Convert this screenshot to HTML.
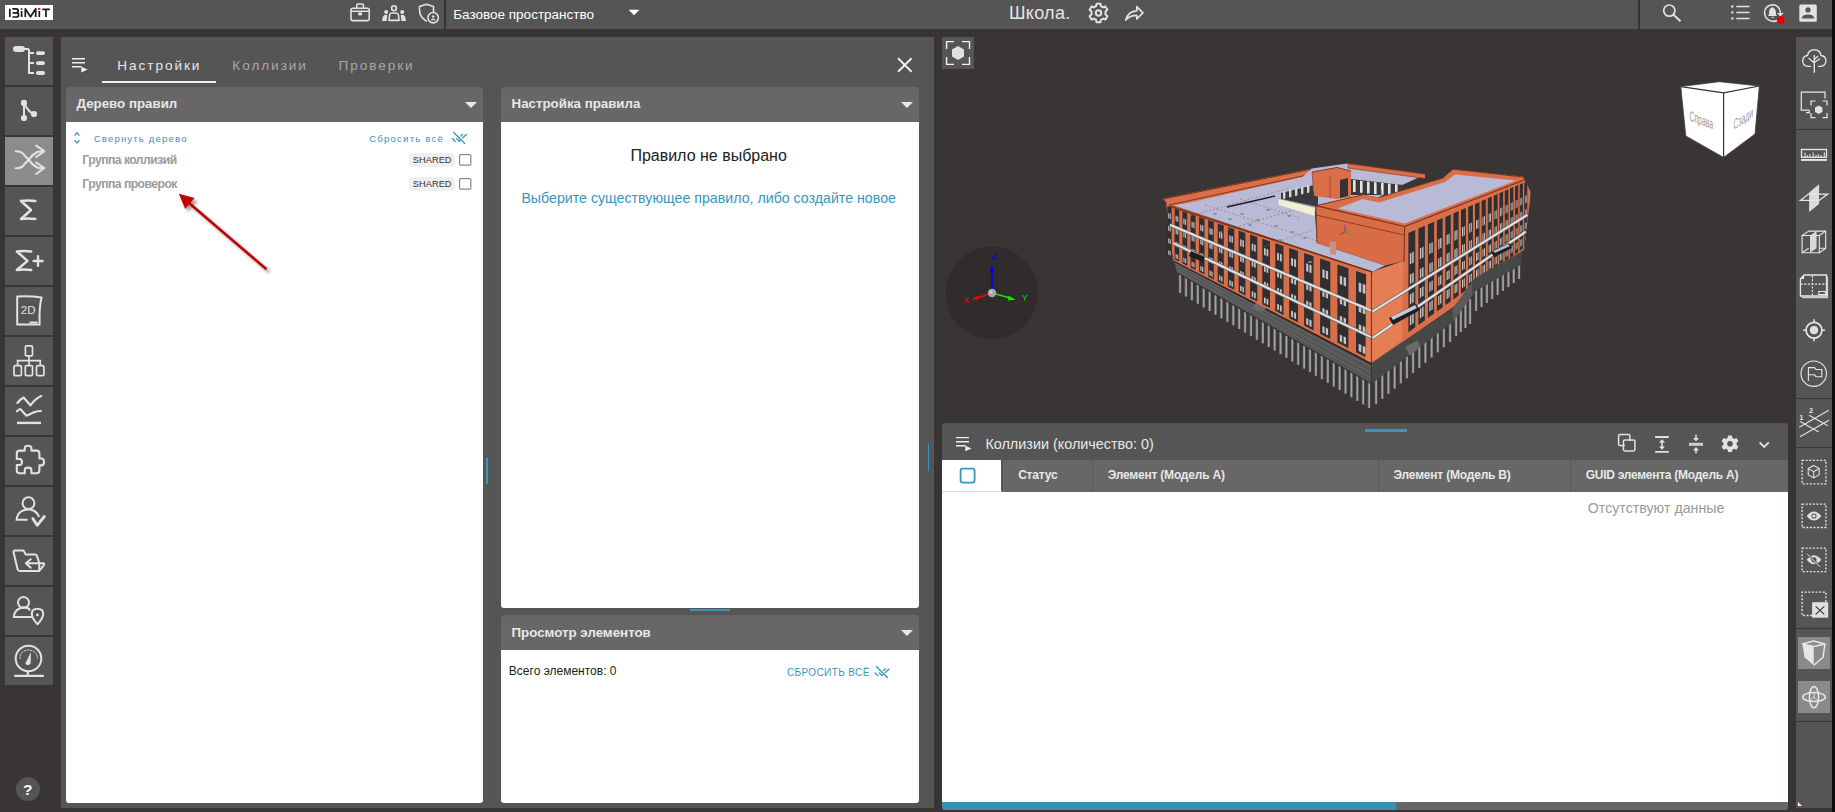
<!DOCTYPE html>
<html><head><meta charset="utf-8">
<style>
*{margin:0;padding:0;box-sizing:border-box}
html,body{width:1835px;height:812px;overflow:hidden;background:#393535;font-family:"Liberation Sans",sans-serif}
.a{position:absolute}
.t{position:absolute;white-space:nowrap}
svg{position:absolute;overflow:visible}
</style></head><body>

<div class="a" style="left:0px;top:0px;width:1835px;height:29px;background:#555555;"></div>
<div class="a" style="left:5px;top:5px;width:48px;height:15px;background:#ffffff;"></div>
<svg style="left:0;top:0" width="1835" height="29">
<g fill="none" stroke="#1a1a1a" stroke-width="1.7" stroke-linejoin="round">
  <path d="M9.8 8.8V17"/>
  <path d="M12.4 8.8H16.1Q18.2 8.8 18.2 10.8Q18.2 12.8 16.1 12.8H12.6M16.1 12.8Q18.6 12.8 18.6 14.9Q18.6 17 16.1 17H12.4"/>
  <path d="M21.6 11V17"/>
  <path d="M25.3 17V8.8L30.5 16.8L35.7 8.8V17"/>
  <path d="M39.3 11V17"/>
  <path d="M42.3 9.3H49.8M46 9.3V17"/>
</g>
<rect x="20.8" y="8.3" width="1.6" height="1.6" fill="#1a1a1a"/>
<rect x="38.2" y="7.9" width="2.1" height="2" fill="#ff0000"/>
<g fill="none" stroke="#e2e2e2" stroke-linecap="round" stroke-linejoin="round" stroke-width="1.6">
  <rect x="351" y="8.2" width="18.2" height="12.4" rx="1.5"/>
  <path d="M356.8 8V5Q356.8 4 357.8 4H362.4Q363.4 4 363.4 5V8"/>
  <path d="M351 11.2H369.2"/>
</g>
<rect x="358.2" y="12.5" width="3.8" height="2.8" fill="#e2e2e2"/>
<circle cx="394" cy="8.2" r="2.4" fill="none" stroke="#e2e2e2" stroke-linecap="round" stroke-linejoin="round" stroke-width="1.6"/>
<circle cx="386.2" cy="12.1" r="2" fill="#e2e2e2"/>
<circle cx="402.2" cy="12.1" r="2" fill="#e2e2e2"/>
<path d="M389 20.4L389.6 15Q390 13 392 13H396Q398 13 398.4 15L399.1 20.4Z" fill="none" stroke="#e2e2e2" stroke-linecap="round" stroke-linejoin="round" stroke-width="1.6"/>
<path d="M382 21L382.8 17Q383.5 14.8 386 14.8L387.2 15L386.6 21Z" fill="#e2e2e2"/>
<path d="M406 21L405.2 17Q404.5 14.8 402 14.8L400.8 15L401.4 21Z" fill="#e2e2e2"/>
<path d="M426.3 21Q419.5 17 419.5 10V6.6L426.5 4.3L433.5 6.6V11.8" fill="none" stroke="#e2e2e2" stroke-linecap="round" stroke-linejoin="round" stroke-width="1.6"/>
<circle cx="433.2" cy="17.7" r="5.2" fill="none" stroke="#e2e2e2" stroke-linecap="round" stroke-linejoin="round" stroke-width="1.6"/>
<circle cx="433.2" cy="16.5" r="1.2" fill="#e2e2e2"/>
<path d="M430.8 20.2Q431 18.6 433.2 18.6Q435.4 18.6 435.6 20.2Z" fill="#e2e2e2"/>
<path d="M628.6 9.8H639.5L634 15.3Z" fill="#ffffff"/>
<g transform="translate(1098.5 13)">
  <path d="M-2 -9.2H2L2.4 -6.8L4.6 -5.6L6.9 -6.6L8.9 -3.2L7 -1.6V1.6L8.9 3.2L6.9 6.6L4.6 5.6L2.4 6.8L2 9.2H-2L-2.4 6.8L-4.6 5.6L-6.9 6.6L-8.9 3.2L-7 1.6V-1.6L-8.9 -3.2L-6.9 -6.6L-4.6 -5.6L-2.4 -6.8Z" fill="none" stroke="#e2e2e2" stroke-linecap="round" stroke-linejoin="round" stroke-width="2"/>
  <circle cx="0" cy="0" r="2.7" fill="none" stroke="#e2e2e2" stroke-linecap="round" stroke-linejoin="round" stroke-width="2"/>
</g>
<path d="M1125.8 20Q1128 11.2 1136.8 10.8V6.6L1142.9 12.9L1136.8 19V15.3Q1130 15.2 1125.8 20Z" fill="none" stroke="#e2e2e2" stroke-width="1.7" stroke-linejoin="round"/>
<circle cx="1669.3" cy="10.6" r="5.6" fill="none" stroke="#e2e2e2" stroke-linecap="round" stroke-linejoin="round" stroke-width="1.7"/>
<path d="M1673.5 14.8L1680.5 21.2" fill="none" stroke="#e2e2e2" stroke-width="1.9"/>
<circle cx="1732.3" cy="6.5" r="1.2" fill="#e2e2e2"/>
<circle cx="1732.3" cy="12.4" r="1.2" fill="#e2e2e2"/>
<circle cx="1732.3" cy="18.4" r="1.2" fill="#e2e2e2"/>
<path d="M1736.3 6.5H1749.5M1736.3 12.4H1749.5M1736.3 18.4H1749.5" fill="none" stroke="#e2e2e2" stroke-width="1.5"/>
<path d="M1779 19.8Q1775.5 21.8 1772 21.2Q1765 20 1764.5 12.5Q1765 5.5 1772.5 4.7Q1779.5 5 1780.5 12.5" fill="none" stroke="#e2e2e2" stroke-linecap="round" stroke-linejoin="round" stroke-width="1.6"/>
<path d="M1777 13H1783.8L1780.3 16.4Z" fill="#e2e2e2"/>
<path d="M1768 16H1777L1775.9 14.2V11.6Q1775.6 8.7 1772.4 7.1Q1769.2 8.7 1769.1 11.6V14.2Z" fill="#e2e2e2"/>
<rect x="1771.7" y="16.8" width="2" height="1" fill="#e2e2e2"/>
<circle cx="1780.8" cy="20" r="3.9" fill="#ee0000"/>
<rect x="1799.3" y="4.5" width="17.5" height="17.3" rx="1.5" fill="#e2e2e2"/>
<circle cx="1808" cy="9.9" r="2.6" fill="#555555"/>
<path d="M1801.8 18.6Q1802 14.8 1808 14.6Q1814 14.8 1814.3 18.6Z" fill="#555555"/>
</svg>
<div class="a" style="left:444px;top:0px;width:2px;height:29px;background:#353232;"></div>
<div class="a" style="left:1638px;top:0px;width:2px;height:29px;background:#353232;"></div>
<div class="a" style="left:1832px;top:0px;width:3px;height:29px;background:#393535;"></div>
<div class="t" style="left:453.25px;top:7.72px;font-size:13.5px;line-height:13.5px;color:#ffffff;font-weight:normal;letter-spacing:0px;">Базовое пространство</div>
<div class="t" style="left:1009.04px;top:3.90px;font-size:18px;line-height:18px;color:#e6e6e6;font-weight:normal;letter-spacing:0.3px;">Школа.</div>
<div class="a" style="left:5px;top:37px;width:48px;height:48px;background:#555555;"></div>
<svg style="left:5px;top:37px" width="48" height="48"><rect x="8" y="9" width="12" height="6" rx="3" fill="#e2e2e2"/><path d="M19 12H22.5Q24 12 24 13.5V36H29M24 16H29M24 26H29" fill="none" stroke="#e2e2e2" stroke-width="2"/><rect x="31" y="14.2" width="9" height="3.8" rx="1.9" fill="#e2e2e2"/><rect x="31" y="24.2" width="9" height="3.8" rx="1.9" fill="#e2e2e2"/><rect x="31" y="34.1" width="9" height="3.8" rx="1.9" fill="#e2e2e2"/></svg>
<div class="a" style="left:5px;top:87px;width:48px;height:48px;background:#555555;"></div>
<svg style="left:5px;top:87px" width="48" height="48"><circle cx="19" cy="15.9" r="3.1" fill="#e2e2e2"/><circle cx="19" cy="31" r="3.1" fill="#e2e2e2"/><circle cx="29" cy="27" r="3.1" fill="#e2e2e2"/><path d="M19 16V31M19.5 17Q23 24 28 27" fill="none" stroke="#e2e2e2" stroke-linecap="round" stroke-linejoin="round" stroke-width="2"/></svg>
<div class="a" style="left:5px;top:137px;width:48px;height:48px;background:#8c8c8c;"></div>
<svg style="left:5px;top:137px" width="48" height="48"><path d="M10.8 14.2Q17 14 19.5 18.5L23.7 22.8Q27 27.5 32 30.5Q35 31.2 39.3 31M10.8 31.3Q17 31.5 19.5 27L23.7 22.8Q27 18 32 15Q35 14.2 39.3 14.2M31.2 8.6L39.3 14.2L31.2 20M31.2 25.5L39.3 31L31.2 37" fill="none" stroke="#e2e2e2" stroke-linecap="round" stroke-linejoin="round" stroke-width="2.1"/></svg>
<div class="a" style="left:5px;top:187px;width:48px;height:48px;background:#555555;"></div>
<svg style="left:5px;top:187px" width="48" height="48"><path d="M16 14Q23 13 30.3 14M16 14L26 23L16 32Q23 31 30.3 32" fill="none" stroke="#e2e2e2" stroke-linecap="round" stroke-linejoin="round" stroke-width="2.6"/></svg>
<div class="a" style="left:5px;top:237px;width:48px;height:48px;background:#555555;"></div>
<svg style="left:5px;top:237px" width="48" height="48"><path d="M11.8 14.5Q19 13.5 26.2 14.5M11.8 14.5L22.5 23.8L11.8 33Q19 32 26.2 33M28.6 24H37.6M33 19.2V28.8" fill="none" stroke="#e2e2e2" stroke-linecap="round" stroke-linejoin="round" stroke-width="2.4"/></svg>
<div class="a" style="left:5px;top:287px;width:48px;height:48px;background:#555555;"></div>
<svg style="left:5px;top:287px" width="48" height="48"><path d="M12.2 9.5Q24 8.5 36.6 10.5Q34 20 34.6 37.5H12.2Z" fill="none" stroke="#e2e2e2" stroke-linecap="round" stroke-linejoin="round" stroke-width="2"/><path d="M25 34.5H32.5V36.5H24Z" fill="#e2e2e2"/><text x="15.8" y="27" font-family="Liberation Sans" font-size="11.5" fill="#e2e2e2">2D</text></svg>
<div class="a" style="left:5px;top:337px;width:48px;height:48px;background:#555555;"></div>
<svg style="left:5px;top:337px" width="48" height="48"><rect x="20.4" y="8.9" width="7.1" height="10" rx="1.2" fill="none" stroke="#e2e2e2" stroke-linecap="round" stroke-linejoin="round" stroke-width="1.7"/><path d="M24 19V28.4M12.6 28.4V23.6H35.2V28.4" fill="none" stroke="#e2e2e2" stroke-width="1.7"/><rect x="9" y="28.6" width="7.4" height="10" rx="1.2" fill="none" stroke="#e2e2e2" stroke-linecap="round" stroke-linejoin="round" stroke-width="1.7"/><rect x="20.3" y="28.6" width="7.2" height="10" rx="1.2" fill="none" stroke="#e2e2e2" stroke-linecap="round" stroke-linejoin="round" stroke-width="1.7"/><rect x="31.5" y="28.6" width="7.4" height="10" rx="1.2" fill="none" stroke="#e2e2e2" stroke-linecap="round" stroke-linejoin="round" stroke-width="1.7"/></svg>
<div class="a" style="left:5px;top:387px;width:48px;height:48px;background:#555555;"></div>
<svg style="left:5px;top:387px" width="48" height="48"><path d="M12.4 16Q15.5 12 18.6 10.5L25.4 18.3Q31 11 36.3 9" fill="none" stroke="#e2e2e2" stroke-linecap="round" stroke-linejoin="round" stroke-width="2.2"/><path d="M12 24.3Q14 22 15.3 22L21.5 28.7L29 25.3Q33 24 35.8 24" fill="none" stroke="#e2e2e2" stroke-linecap="round" stroke-linejoin="round" stroke-width="2.2"/><path d="M12 35.9H36" fill="none" stroke="#e2e2e2" stroke-width="2.4"/></svg>
<div class="a" style="left:5px;top:437px;width:48px;height:48px;background:#555555;"></div>
<svg style="left:5px;top:437px" width="48" height="48"><path d="M14.5 13.6H19.8V11.2Q19.8 8.8 23 8.8Q26.4 8.8 26.4 11.2V13.6H31.6Q34.4 13.6 34.4 16.4V21.5H36.5Q39 21.5 39 25Q39 28.4 36.5 28.4H34.4V33.5Q34.4 36.2 31.6 36.2H26.4V33Q26.4 30.6 23 30.6Q19.8 30.6 19.8 33V36.2H14.5Q11.8 36.2 11.8 33.5V28H14.5Q17 28 17 25Q17 22 14.5 22H11.8V16.4Q11.8 13.6 14.5 13.6Z" fill="none" stroke="#e2e2e2" stroke-linecap="round" stroke-linejoin="round" stroke-width="2.1"/></svg>
<div class="a" style="left:5px;top:487px;width:48px;height:48px;background:#555555;"></div>
<svg style="left:5px;top:487px" width="48" height="48"><circle cx="23.5" cy="16.2" r="5.9" fill="none" stroke="#e2e2e2" stroke-linecap="round" stroke-linejoin="round" stroke-width="2"/><path d="M22.5 32.8H11.6Q12 26 18 23.5Q23.5 21.5 28.5 23.5Q32.5 25.5 34 30" fill="none" stroke="#e2e2e2" stroke-width="2"/><path d="M27.8 31.5L32.2 38.3L39.3 29.5" fill="none" stroke="#e2e2e2" stroke-linecap="round" stroke-linejoin="round" stroke-width="2.8"/></svg>
<div class="a" style="left:5px;top:537px;width:48px;height:48px;background:#555555;"></div>
<svg style="left:5px;top:537px" width="48" height="48"><path d="M34.2 34H14.5Q13 34 12.5 32L8.6 15.5Q8.4 13.8 10 13.6L18.5 13.5L20.8 17.6H30Q31.5 17.6 32 19L34.3 26Z" fill="none" stroke="#e2e2e2" stroke-linecap="round" stroke-linejoin="round" stroke-width="2"/><path d="M33.5 26.2H38.5Q39.8 26.5 38.5 28.6L34.2 34M20.8 26.2H33.5M25.8 22.3L20.8 26.2L25.8 30.7" fill="none" stroke="#e2e2e2" stroke-linecap="round" stroke-linejoin="round" stroke-width="2"/></svg>
<div class="a" style="left:5px;top:587px;width:48px;height:48px;background:#555555;"></div>
<svg style="left:5px;top:587px" width="48" height="48"><circle cx="18.5" cy="15.5" r="5.5" fill="none" stroke="#e2e2e2" stroke-linecap="round" stroke-linejoin="round" stroke-width="2"/><path d="M27 30H8.8Q9.2 24 14.5 21.5Q19 19.5 22.5 21Q24.5 22 25 23.5" fill="none" stroke="#e2e2e2" stroke-width="2"/><path d="M32.5 37.2Q26.8 31 26.8 27Q26.8 21.8 32.5 21.8Q38.2 21.8 38.2 27Q38.2 31 32.5 37.2Z" fill="none" stroke="#e2e2e2" stroke-linecap="round" stroke-linejoin="round" stroke-width="2"/><circle cx="32.4" cy="28" r="1.4" fill="#e2e2e2"/></svg>
<div class="a" style="left:5px;top:637px;width:48px;height:48px;background:#555555;"></div>
<svg style="left:5px;top:637px" width="48" height="48"><circle cx="23.5" cy="21.5" r="12.8" fill="none" stroke="#e2e2e2" stroke-linecap="round" stroke-linejoin="round" stroke-width="2"/><path d="M15 21.5Q15 13.5 23.5 13Q32 13.5 32.5 21.5" fill="none" stroke="#e2e2e2" stroke-linecap="round" stroke-linejoin="round" stroke-width="0.9" stroke-dasharray="1.6 1.4"/><path d="M25.9 15L20.4 26.4Q21.5 28.5 23.6 28Q25.5 27.5 25.7 26Z" fill="#e2e2e2"/><path d="M22.8 34.5V38.5M9.3 38.9H38.8" fill="none" stroke="#e2e2e2" stroke-width="2.2"/></svg>
<div class="a" style="left:16px;top:777px;width:24px;height:24px;border-radius:50%;background:#555555"></div>
<div class="t" style="left:23.11px;top:782.12px;font-size:15.5px;line-height:15.5px;color:#ffffff;font-weight:bold;letter-spacing:0px;">?</div>
<div class="a" style="left:61px;top:37px;width:873px;height:771px;background:#555555;"></div>
<svg style="left:0;top:0" width="940" height="120">
  <path d="M72 58.7H85M72 62.8H85M72 66.8H81.5" stroke="#f0f0f0" stroke-width="1.4"/>
  <path d="M81.3 66.8L87.6 69.6L81.3 72.4Z" fill="#f0f0f0"/>
  <path d="M898 58.3L911.6 71.7M911.6 58.3L898 71.7" stroke="#f0f0f0" stroke-width="1.9"/>
</svg>
<div class="t" style="left:117.35px;top:58.74px;font-size:13.6px;line-height:13.6px;color:#e8e8e8;font-weight:normal;letter-spacing:1.93px;">Настройки</div>
<div class="t" style="left:232.35px;top:58.74px;font-size:13.6px;line-height:13.6px;color:#a8a8a8;font-weight:normal;letter-spacing:1.93px;">Коллизии</div>
<div class="t" style="left:338.55px;top:58.74px;font-size:13.6px;line-height:13.6px;color:#a8a8a8;font-weight:normal;letter-spacing:1.93px;">Проверки</div>
<div class="a" style="left:102px;top:81px;width:114px;height:2px;background:#f0f0f0;"></div>
<div class="a" style="left:66px;top:87px;width:417px;height:35px;background:#676767;border-radius:3px 3px 0 0"></div>
<div class="t" style="left:76.57px;top:97.40px;font-size:13.3px;line-height:13.3px;color:#e8e8e8;font-weight:bold;letter-spacing:0px;">Дерево правил</div>
<svg style="left:0;top:0" width="1" height="1"><path d="M465 102.0H477L471 108.0Z" fill="#e8e8e8"/></svg>
<div class="a" style="left:66px;top:122px;width:417px;height:681px;background:#ffffff;border-radius:0 0 3px 3px"></div>
<div class="a" style="left:501px;top:87px;width:418px;height:35px;background:#676767;border-radius:3px 3px 0 0"></div>
<div class="t" style="left:511.57px;top:97.40px;font-size:13.3px;line-height:13.3px;color:#e8e8e8;font-weight:bold;letter-spacing:0px;">Настройка правила</div>
<svg style="left:0;top:0" width="1" height="1"><path d="M901 102.0H913L907 108.0Z" fill="#e8e8e8"/></svg>
<div class="a" style="left:501px;top:122px;width:418px;height:486px;background:#ffffff;border-radius:0 0 3px 3px"></div>
<div class="a" style="left:501px;top:615px;width:418px;height:35px;background:#676767;border-radius:3px 3px 0 0"></div>
<div class="t" style="left:511.57px;top:625.70px;font-size:13.3px;line-height:13.3px;color:#e8e8e8;font-weight:bold;letter-spacing:0px;">Просмотр элементов</div>
<svg style="left:0;top:0" width="1" height="1"><path d="M901 630.0H913L907 636.0Z" fill="#e8e8e8"/></svg>
<div class="a" style="left:501px;top:650px;width:418px;height:153px;background:#ffffff;border-radius:0 0 3px 3px"></div>
<div class="a" style="left:690px;top:609px;width:40px;height:2px;background:#3896bb;"></div>
<div class="a" style="left:486px;top:458px;width:1.5px;height:26px;background:#3896bb;"></div>
<div class="a" style="left:927.5px;top:444px;width:1.5px;height:27px;background:#3896bb;"></div>
<svg style="left:0;top:0" width="940" height="300">
  <path d="M74.6 135.6L77 132.8L79.4 135.6M74.6 140.2L77 143L79.4 140.2" fill="none" stroke="#3896bb" stroke-width="1.3"/>
  <g fill="none" stroke="#3896bb" stroke-width="1.35" stroke-linecap="round">
    <path d="M453.7 132.4L464.5 143.2M452.4 138.6L455.2 141.4M456.6 138.6L459.3 141.2L460 140.5M460.9 136L462.5 134.4M462.5 138.1L466.4 134.5"/>
  </g>
  <rect x="409" y="153" width="46" height="14" rx="4" fill="#efefef"/>
  <rect x="409" y="177" width="46" height="14" rx="4" fill="#efefef"/>
  <rect x="459.6" y="154.6" width="11.2" height="10.6" rx="1" fill="none" stroke="#8a8a8a" stroke-width="1.2"/>
  <rect x="459.6" y="178.6" width="11.2" height="10.6" rx="1" fill="none" stroke="#8a8a8a" stroke-width="1.2"/>
  <defs><filter id="sh" x="-20%" y="-20%" width="140%" height="140%"><feGaussianBlur stdDeviation="1.6"/></filter></defs>
  <g transform="translate(3 3)" opacity="0.55" filter="url(#sh)">
    <path d="M189 203L266.5 269.3" stroke="#555" stroke-width="2.8"/>
    <path d="M178.8 193.8L194.6 197.9L185.2 209Z" fill="#555"/>
  </g>
  <path d="M189 203L266.5 269.3" stroke="#c40000" stroke-width="2.6"/>
  <path d="M178.8 193.8L194.6 197.9L185.2 209Z" fill="#c40000"/>
</svg>
<div class="t" style="left:93.73px;top:133.64px;font-size:9.6px;line-height:9.6px;color:#3896bb;font-weight:normal;letter-spacing:1.15px;">Свернуть дерево</div>
<div class="t" style="left:369.23px;top:133.64px;font-size:9.6px;line-height:9.6px;color:#3896bb;font-weight:normal;letter-spacing:1.2px;">Сбросить всё</div>
<div class="t" style="left:82.35px;top:153.83px;font-size:12.2px;line-height:12.2px;color:#9b9b9b;font-weight:bold;letter-spacing:-0.55px;">Группа коллизий</div>
<div class="t" style="left:82.35px;top:177.83px;font-size:12.2px;line-height:12.2px;color:#9b9b9b;font-weight:bold;letter-spacing:-0.55px;">Группа проверок</div>
<div class="t" style="left:412.85px;top:155.50px;font-size:9.3px;line-height:9.3px;color:#333333;font-weight:normal;letter-spacing:0px;">SHARED</div>
<div class="t" style="left:412.85px;top:179.50px;font-size:9.3px;line-height:9.3px;color:#333333;font-weight:normal;letter-spacing:0px;">SHARED</div>
<div class="t" style="left:630.38px;top:147.60px;font-size:16px;line-height:16px;color:#222222;font-weight:normal;letter-spacing:0px;">Правило не выбрано</div>
<div class="t" style="left:521.41px;top:191.33px;font-size:14.2px;line-height:14.2px;color:#3896bb;font-weight:normal;letter-spacing:0px;">Выберите существующее правило, либо создайте новое</div>
<div class="t" style="left:508.86px;top:665.10px;font-size:12px;line-height:12px;color:#222222;font-weight:normal;letter-spacing:0px;">Всего элементов: 0</div>
<div class="t" style="left:786.90px;top:667.80px;font-size:10px;line-height:10px;color:#3896bb;font-weight:normal;letter-spacing:0.4px;">СБРОСИТЬ ВСЁ</div>
<svg style="left:0;top:0" width="1" height="1"><g fill="none" stroke="#3896bb" stroke-width="1.3">
    <path d="M876.3 666.6L887.5 677.6M875 673L877.9 675.8M879.3 673L882 675.6L882.7 674.9M883.6 670.4L885.2 668.8M885.2 672.5L889.1 668.9" stroke-linecap="round" stroke-width="1.35"/>
  </g></svg>
<div class="a" style="left:942px;top:423px;width:846px;height:37px;background:#555555;border-radius:3px 3px 0 0"></div>
<svg style="left:0;top:0" width="1" height="1">
  <path d="M956 437.6H969M956 441.7H969M956 445.7H965.5" stroke="#f0f0f0" stroke-width="1.4"/>
  <path d="M965.3 445.7L971.6 448.5L965.3 451.3Z" fill="#f0f0f0"/>
</svg>
<div class="t" style="left:985.39px;top:437.36px;font-size:14.4px;line-height:14.4px;color:#e8e8e8;font-weight:normal;letter-spacing:0px;">Коллизии (количество: 0)</div>
<div class="a" style="left:1365px;top:429px;width:42px;height:3px;background:#3896bb;"></div>
<div class="a" style="left:942px;top:460px;width:846px;height:32px;background:#676767;"></div>
<div class="a" style="left:942px;top:460px;width:60px;height:32px;background:#ffffff;border-bottom:1px solid #dddddd"></div>
<svg style="left:0;top:0" width="1" height="1"><rect x="960.6" y="468.6" width="14" height="14" rx="2" fill="none" stroke="#3896bb" stroke-width="1.8"/></svg>
<div class="a" style="left:1001px;top:460px;width:1.5px;height:32px;background:#555555;border-radius:0 0 0 3px"></div>
<div class="a" style="left:1092px;top:460px;width:1px;height:32px;background:#5a5a5a;"></div>
<div class="a" style="left:1378px;top:460px;width:1px;height:32px;background:#5a5a5a;"></div>
<div class="a" style="left:1570px;top:460px;width:1px;height:32px;background:#5a5a5a;"></div>
<div class="t" style="left:1018.16px;top:469.40px;font-size:12px;line-height:12px;color:#e8e8e8;font-weight:bold;letter-spacing:-0.2px;">Статус</div>
<div class="t" style="left:1107.66px;top:469.40px;font-size:12px;line-height:12px;color:#e8e8e8;font-weight:bold;letter-spacing:-0.2px;">Элемент (Модель A)</div>
<div class="t" style="left:1393.56px;top:469.40px;font-size:12px;line-height:12px;color:#e8e8e8;font-weight:bold;letter-spacing:-0.2px;">Элемент (Модель B)</div>
<div class="t" style="left:1585.66px;top:469.40px;font-size:12px;line-height:12px;color:#e8e8e8;font-weight:bold;letter-spacing:-0.26px;">GUID элемента (Модель A)</div>
<div class="a" style="left:942px;top:492px;width:846px;height:310px;background:#ffffff;"></div>
<div class="t" style="left:1587.81px;top:500.93px;font-size:14.2px;line-height:14.2px;color:#9a9a9a;font-weight:normal;letter-spacing:0px;">Отсутствуют данные</div>
<div class="a" style="left:942px;top:802px;width:846px;height:8px;background:#676767;border-radius:0 0 3px 3px"></div>
<div class="a" style="left:942px;top:802px;width:454px;height:8px;background:#3b91b1;border-radius:0 0 0 3px"></div>
<svg style="left:0;top:0" width="1" height="1">
<rect x="942" y="37" width="32" height="32" fill="#555555"/>
<path d="M946.6 49V41.6H954M962 41.6H969.5V49M969.5 57V64.4H962M954 64.4H946.6V57" fill="none" stroke="#f0f0f0" stroke-width="1.4"/>
<path d="M958 46.1L964 49.5V56.5L958 59.9L952 56.5V49.5Z" fill="#e0e0e0"/>
<circle cx="991.7" cy="293" r="46.2" fill="#302c2c"/>
<line x1="992" y1="293" x2="992" y2="270" stroke="#0000ff" stroke-width="1.6"/>
<path d="M992 264.6L994.2 272H989.8Z" fill="#0000ff"/>
<line x1="992" y1="293" x2="976" y2="298.5" stroke="#ff0000" stroke-width="1.6"/>
<path d="M971 300.2L977.5 295.5L978.5 299.5Z" fill="#ff0000"/>
<line x1="992" y1="293" x2="1010" y2="298" stroke="#00ee00" stroke-width="1.6"/>
<path d="M1015.7 299.8L1008.5 295.5L1008 300.5Z" fill="#00ee00"/>
<circle cx="992" cy="293" r="4.2" fill="#a8a8a8"/>
<circle cx="991" cy="292" r="1.5" fill="#d0d0d0"/>
<text x="991.5" y="258.5" font-family="Liberation Sans" font-size="8.5" fill="#0000ff">Z</text>
<text x="963.5" y="303" font-family="Liberation Sans" font-size="8.5" fill="#ff0000">X</text>
<text x="1022" y="301" font-family="Liberation Sans" font-size="8.5" fill="#00dd00">Y</text>
<polygon points="1680.8,86.6 1719.3,81.7 1759.3,86 1755,134 1723.6,157.4 1685.8,135.9" fill="#ffffff"/>
<path d="M1680.8 86.6L1723.6 92.8L1759.3 86M1723.6 92.8V157.4" fill="none" stroke="#333" stroke-width="1.2"/>
<path d="M1680.8 86.6L1719.3 81.7L1759.3 86L1755 134L1723.6 157.4L1685.8 135.9Z" fill="none" stroke="#444" stroke-width="0.8"/>
<text transform="translate(1689.5 120.5) skewY(20) scale(0.62 1.3)" font-family="Liberation Sans" font-size="11" fill="#9a9a9a">Справа</text>
<text transform="translate(1733.5 130) skewY(-34) scale(0.62 1.3)" font-family="Liberation Sans" font-size="11" fill="#9a9a9a">Сзади</text>
<line x1="1180.0" y1="273.0" x2="1180.0" y2="293.0" stroke="#6a6a6a" stroke-width="2.6" />
<line x1="1180.2" y1="273.0" x2="1180.2" y2="293.0" stroke="#a4a4a4" stroke-width="1.5" />
<line x1="1185.9" y1="276.4" x2="1185.9" y2="296.6" stroke="#6a6a6a" stroke-width="2.6" />
<line x1="1186.1" y1="276.4" x2="1186.1" y2="296.6" stroke="#a4a4a4" stroke-width="1.5" />
<line x1="1191.8" y1="279.8" x2="1191.8" y2="300.2" stroke="#6a6a6a" stroke-width="2.6" />
<line x1="1192.0" y1="279.8" x2="1192.0" y2="300.2" stroke="#a4a4a4" stroke-width="1.5" />
<line x1="1197.7" y1="283.1" x2="1197.7" y2="303.8" stroke="#6a6a6a" stroke-width="2.6" />
<line x1="1197.9" y1="283.1" x2="1197.9" y2="303.8" stroke="#a4a4a4" stroke-width="1.5" />
<line x1="1203.6" y1="286.5" x2="1203.6" y2="307.4" stroke="#6a6a6a" stroke-width="2.6" />
<line x1="1203.8" y1="286.5" x2="1203.8" y2="307.4" stroke="#a4a4a4" stroke-width="1.5" />
<line x1="1209.5" y1="289.9" x2="1209.5" y2="311.0" stroke="#6a6a6a" stroke-width="2.6" />
<line x1="1209.7" y1="289.9" x2="1209.7" y2="311.0" stroke="#a4a4a4" stroke-width="1.5" />
<line x1="1215.4" y1="293.2" x2="1215.4" y2="314.6" stroke="#6a6a6a" stroke-width="2.6" />
<line x1="1215.6" y1="293.2" x2="1215.6" y2="314.6" stroke="#a4a4a4" stroke-width="1.5" />
<line x1="1221.3" y1="296.6" x2="1221.3" y2="318.2" stroke="#6a6a6a" stroke-width="2.6" />
<line x1="1221.5" y1="296.6" x2="1221.5" y2="318.2" stroke="#a4a4a4" stroke-width="1.5" />
<line x1="1227.2" y1="300.0" x2="1227.2" y2="321.8" stroke="#6a6a6a" stroke-width="2.6" />
<line x1="1227.5" y1="300.0" x2="1227.5" y2="321.8" stroke="#a4a4a4" stroke-width="1.5" />
<line x1="1233.2" y1="303.4" x2="1233.2" y2="325.3" stroke="#6a6a6a" stroke-width="2.6" />
<line x1="1233.4" y1="303.4" x2="1233.4" y2="325.3" stroke="#a4a4a4" stroke-width="1.5" />
<line x1="1239.1" y1="306.8" x2="1239.1" y2="328.9" stroke="#6a6a6a" stroke-width="2.6" />
<line x1="1239.3" y1="306.8" x2="1239.3" y2="328.9" stroke="#a4a4a4" stroke-width="1.5" />
<line x1="1245.0" y1="310.1" x2="1245.0" y2="332.5" stroke="#6a6a6a" stroke-width="2.6" />
<line x1="1245.2" y1="310.1" x2="1245.2" y2="332.5" stroke="#a4a4a4" stroke-width="1.5" />
<line x1="1250.9" y1="313.5" x2="1250.9" y2="336.1" stroke="#6a6a6a" stroke-width="2.6" />
<line x1="1251.1" y1="313.5" x2="1251.1" y2="336.1" stroke="#a4a4a4" stroke-width="1.5" />
<line x1="1256.8" y1="316.9" x2="1256.8" y2="339.7" stroke="#6a6a6a" stroke-width="2.6" />
<line x1="1257.0" y1="316.9" x2="1257.0" y2="339.7" stroke="#a4a4a4" stroke-width="1.5" />
<line x1="1262.7" y1="320.2" x2="1262.7" y2="343.3" stroke="#6a6a6a" stroke-width="2.6" />
<line x1="1262.9" y1="320.2" x2="1262.9" y2="343.3" stroke="#a4a4a4" stroke-width="1.5" />
<line x1="1268.6" y1="323.6" x2="1268.6" y2="346.9" stroke="#6a6a6a" stroke-width="2.6" />
<line x1="1268.8" y1="323.6" x2="1268.8" y2="346.9" stroke="#a4a4a4" stroke-width="1.5" />
<line x1="1274.5" y1="327.0" x2="1274.5" y2="350.5" stroke="#6a6a6a" stroke-width="2.6" />
<line x1="1274.7" y1="327.0" x2="1274.7" y2="350.5" stroke="#a4a4a4" stroke-width="1.5" />
<line x1="1280.4" y1="330.4" x2="1280.4" y2="354.1" stroke="#6a6a6a" stroke-width="2.6" />
<line x1="1280.6" y1="330.4" x2="1280.6" y2="354.1" stroke="#a4a4a4" stroke-width="1.5" />
<line x1="1286.3" y1="333.8" x2="1286.3" y2="357.7" stroke="#6a6a6a" stroke-width="2.6" />
<line x1="1286.5" y1="333.8" x2="1286.5" y2="357.7" stroke="#a4a4a4" stroke-width="1.5" />
<line x1="1292.2" y1="337.1" x2="1292.2" y2="361.3" stroke="#6a6a6a" stroke-width="2.6" />
<line x1="1292.4" y1="337.1" x2="1292.4" y2="361.3" stroke="#a4a4a4" stroke-width="1.5" />
<line x1="1298.1" y1="340.5" x2="1298.1" y2="364.9" stroke="#6a6a6a" stroke-width="2.6" />
<line x1="1298.3" y1="340.5" x2="1298.3" y2="364.9" stroke="#a4a4a4" stroke-width="1.5" />
<line x1="1304.0" y1="343.9" x2="1304.0" y2="368.5" stroke="#6a6a6a" stroke-width="2.6" />
<line x1="1304.2" y1="343.9" x2="1304.2" y2="368.5" stroke="#a4a4a4" stroke-width="1.5" />
<line x1="1309.9" y1="347.2" x2="1309.9" y2="372.1" stroke="#6a6a6a" stroke-width="2.6" />
<line x1="1310.1" y1="347.2" x2="1310.1" y2="372.1" stroke="#a4a4a4" stroke-width="1.5" />
<line x1="1315.8" y1="350.6" x2="1315.8" y2="375.7" stroke="#6a6a6a" stroke-width="2.6" />
<line x1="1316.0" y1="350.6" x2="1316.0" y2="375.7" stroke="#a4a4a4" stroke-width="1.5" />
<line x1="1321.8" y1="354.0" x2="1321.8" y2="379.2" stroke="#6a6a6a" stroke-width="2.6" />
<line x1="1322.0" y1="354.0" x2="1322.0" y2="379.2" stroke="#a4a4a4" stroke-width="1.5" />
<line x1="1327.7" y1="357.4" x2="1327.7" y2="382.8" stroke="#6a6a6a" stroke-width="2.6" />
<line x1="1327.9" y1="357.4" x2="1327.9" y2="382.8" stroke="#a4a4a4" stroke-width="1.5" />
<line x1="1333.6" y1="360.8" x2="1333.6" y2="386.4" stroke="#6a6a6a" stroke-width="2.6" />
<line x1="1333.8" y1="360.8" x2="1333.8" y2="386.4" stroke="#a4a4a4" stroke-width="1.5" />
<line x1="1339.5" y1="364.1" x2="1339.5" y2="390.0" stroke="#6a6a6a" stroke-width="2.6" />
<line x1="1339.7" y1="364.1" x2="1339.7" y2="390.0" stroke="#a4a4a4" stroke-width="1.5" />
<line x1="1345.4" y1="367.5" x2="1345.4" y2="393.6" stroke="#6a6a6a" stroke-width="2.6" />
<line x1="1345.6" y1="367.5" x2="1345.6" y2="393.6" stroke="#a4a4a4" stroke-width="1.5" />
<line x1="1351.3" y1="370.9" x2="1351.3" y2="397.2" stroke="#6a6a6a" stroke-width="2.6" />
<line x1="1351.5" y1="370.9" x2="1351.5" y2="397.2" stroke="#a4a4a4" stroke-width="1.5" />
<line x1="1357.2" y1="374.2" x2="1357.2" y2="400.8" stroke="#6a6a6a" stroke-width="2.6" />
<line x1="1357.4" y1="374.2" x2="1357.4" y2="400.8" stroke="#a4a4a4" stroke-width="1.5" />
<line x1="1363.1" y1="377.6" x2="1363.1" y2="404.4" stroke="#6a6a6a" stroke-width="2.6" />
<line x1="1363.3" y1="377.6" x2="1363.3" y2="404.4" stroke="#a4a4a4" stroke-width="1.5" />
<line x1="1369.0" y1="381.0" x2="1369.0" y2="408.0" stroke="#6a6a6a" stroke-width="2.6" />
<line x1="1369.2" y1="381.0" x2="1369.2" y2="408.0" stroke="#a4a4a4" stroke-width="1.5" />
<line x1="1376.0" y1="377.0" x2="1376.0" y2="404.0" stroke="#6a6a6a" stroke-width="2.6" />
<line x1="1376.2" y1="377.0" x2="1376.2" y2="404.0" stroke="#a4a4a4" stroke-width="1.5" />
<line x1="1382.2" y1="372.2" x2="1382.2" y2="398.8" stroke="#6a6a6a" stroke-width="2.6" />
<line x1="1382.4" y1="372.2" x2="1382.4" y2="398.8" stroke="#a4a4a4" stroke-width="1.5" />
<line x1="1388.3" y1="367.3" x2="1388.3" y2="393.7" stroke="#6a6a6a" stroke-width="2.6" />
<line x1="1388.5" y1="367.3" x2="1388.5" y2="393.7" stroke="#a4a4a4" stroke-width="1.5" />
<line x1="1394.5" y1="362.5" x2="1394.5" y2="388.5" stroke="#6a6a6a" stroke-width="2.6" />
<line x1="1394.7" y1="362.5" x2="1394.7" y2="388.5" stroke="#a4a4a4" stroke-width="1.5" />
<line x1="1400.7" y1="357.7" x2="1400.7" y2="383.3" stroke="#6a6a6a" stroke-width="2.6" />
<line x1="1400.9" y1="357.7" x2="1400.9" y2="383.3" stroke="#a4a4a4" stroke-width="1.5" />
<line x1="1406.8" y1="352.8" x2="1406.8" y2="378.2" stroke="#6a6a6a" stroke-width="2.6" />
<line x1="1407.0" y1="352.8" x2="1407.0" y2="378.2" stroke="#a4a4a4" stroke-width="1.5" />
<line x1="1413.0" y1="348.0" x2="1413.0" y2="373.0" stroke="#6a6a6a" stroke-width="2.6" />
<line x1="1413.2" y1="348.0" x2="1413.2" y2="373.0" stroke="#a4a4a4" stroke-width="1.5" />
<line x1="1419.2" y1="343.2" x2="1419.2" y2="367.8" stroke="#6a6a6a" stroke-width="2.6" />
<line x1="1419.4" y1="343.2" x2="1419.4" y2="367.8" stroke="#a4a4a4" stroke-width="1.5" />
<line x1="1425.3" y1="338.3" x2="1425.3" y2="362.7" stroke="#6a6a6a" stroke-width="2.6" />
<line x1="1425.5" y1="338.3" x2="1425.5" y2="362.7" stroke="#a4a4a4" stroke-width="1.5" />
<line x1="1431.5" y1="333.5" x2="1431.5" y2="357.5" stroke="#6a6a6a" stroke-width="2.6" />
<line x1="1431.7" y1="333.5" x2="1431.7" y2="357.5" stroke="#a4a4a4" stroke-width="1.5" />
<line x1="1437.7" y1="328.7" x2="1437.7" y2="352.3" stroke="#6a6a6a" stroke-width="2.6" />
<line x1="1437.9" y1="328.7" x2="1437.9" y2="352.3" stroke="#a4a4a4" stroke-width="1.5" />
<line x1="1443.8" y1="323.8" x2="1443.8" y2="347.2" stroke="#6a6a6a" stroke-width="2.6" />
<line x1="1444.0" y1="323.8" x2="1444.0" y2="347.2" stroke="#a4a4a4" stroke-width="1.5" />
<line x1="1450.0" y1="319.0" x2="1450.0" y2="342.0" stroke="#6a6a6a" stroke-width="2.6" />
<line x1="1450.2" y1="319.0" x2="1450.2" y2="342.0" stroke="#a4a4a4" stroke-width="1.5" />
<line x1="1476.0" y1="290.0" x2="1476.0" y2="311.0" stroke="#6a6a6a" stroke-width="2.6" />
<line x1="1476.2" y1="290.0" x2="1476.2" y2="311.0" stroke="#a4a4a4" stroke-width="1.5" />
<line x1="1481.4" y1="286.6" x2="1481.4" y2="307.0" stroke="#6a6a6a" stroke-width="2.6" />
<line x1="1481.6" y1="286.6" x2="1481.6" y2="307.0" stroke="#a4a4a4" stroke-width="1.5" />
<line x1="1486.8" y1="283.2" x2="1486.8" y2="303.0" stroke="#6a6a6a" stroke-width="2.6" />
<line x1="1487.0" y1="283.2" x2="1487.0" y2="303.0" stroke="#a4a4a4" stroke-width="1.5" />
<line x1="1492.1" y1="279.9" x2="1492.1" y2="299.0" stroke="#6a6a6a" stroke-width="2.6" />
<line x1="1492.3" y1="279.9" x2="1492.3" y2="299.0" stroke="#a4a4a4" stroke-width="1.5" />
<line x1="1497.5" y1="276.5" x2="1497.5" y2="295.0" stroke="#6a6a6a" stroke-width="2.6" />
<line x1="1497.7" y1="276.5" x2="1497.7" y2="295.0" stroke="#a4a4a4" stroke-width="1.5" />
<line x1="1502.9" y1="273.1" x2="1502.9" y2="291.0" stroke="#6a6a6a" stroke-width="2.6" />
<line x1="1503.1" y1="273.1" x2="1503.1" y2="291.0" stroke="#a4a4a4" stroke-width="1.5" />
<line x1="1508.2" y1="269.8" x2="1508.2" y2="287.0" stroke="#6a6a6a" stroke-width="2.6" />
<line x1="1508.5" y1="269.8" x2="1508.5" y2="287.0" stroke="#a4a4a4" stroke-width="1.5" />
<line x1="1513.6" y1="266.4" x2="1513.6" y2="283.0" stroke="#6a6a6a" stroke-width="2.6" />
<line x1="1513.8" y1="266.4" x2="1513.8" y2="283.0" stroke="#a4a4a4" stroke-width="1.5" />
<line x1="1519.0" y1="263.0" x2="1519.0" y2="279.0" stroke="#6a6a6a" stroke-width="2.6" />
<line x1="1519.2" y1="263.0" x2="1519.2" y2="279.0" stroke="#a4a4a4" stroke-width="1.5" />
<line x1="1456.0" y1="311.0" x2="1456.0" y2="336.0" stroke="#6a6a6a" stroke-width="2.6" />
<line x1="1456.2" y1="311.0" x2="1456.2" y2="336.0" stroke="#a4a4a4" stroke-width="1.5" />
<line x1="1460.7" y1="307.0" x2="1460.7" y2="332.0" stroke="#6a6a6a" stroke-width="2.6" />
<line x1="1460.9" y1="307.0" x2="1460.9" y2="332.0" stroke="#a4a4a4" stroke-width="1.5" />
<line x1="1465.3" y1="303.0" x2="1465.3" y2="328.0" stroke="#6a6a6a" stroke-width="2.6" />
<line x1="1465.5" y1="303.0" x2="1465.5" y2="328.0" stroke="#a4a4a4" stroke-width="1.5" />
<line x1="1470.0" y1="299.0" x2="1470.0" y2="324.0" stroke="#6a6a6a" stroke-width="2.6" />
<line x1="1470.2" y1="299.0" x2="1470.2" y2="324.0" stroke="#a4a4a4" stroke-width="1.5" />
<polygon points="1173.2,259.0 1371.4,361.8 1371.4,384.1 1177.3,273.0" fill="#555555" />
<line x1="1174.9" y1="263.2" x2="1371.4" y2="367.4" stroke="#6e6e6e" stroke-width="0.7" />
<line x1="1175.8" y1="266.5" x2="1371.4" y2="372.8" stroke="#6e6e6e" stroke-width="0.7" />
<line x1="1176.6" y1="269.8" x2="1371.4" y2="378.1" stroke="#6e6e6e" stroke-width="0.7" />
<polygon points="1173.2,259.0 1371.4,361.8 1371.4,365.0 1174.0,262.0" fill="#2a2a2a" />
<line x1="1177.3" y1="273.0" x2="1371.4" y2="384.1" stroke="#2a2a2a" stroke-width="1.0" />
<polygon points="1371.4,362.8 1453.0,308.0 1453.0,322.0 1371.4,384.1" fill="#474747" />
<polygon points="1453.0,308.0 1474.0,279.0 1474.0,293.0 1453.0,322.0" fill="#5a5a5a" />
<polygon points="1472.0,278.4 1522.3,250.0 1521.0,264.8 1472.0,293.3" fill="#474747" />
<polygon points="1258.0,300.0 1268.0,296.0 1272.0,303.0 1262.0,312.0 1252.0,308.0" fill="#6a6a6a" />
<polygon points="1405.0,347.0 1418.0,340.0 1420.0,347.0 1410.0,356.0" fill="#6a6a6a" />
<polygon points="1166.0,203.0 1372.5,272.0 1371.4,362.8 1173.2,260.2" fill="#d96e48" />
<polygon points="1167.3,206.1 1171.7,207.6 1171.7,257.8 1167.3,255.5" fill="#2f2f33" />
<polygon points="1168.2,212.9 1169.2,213.3 1169.2,218.7 1168.2,218.3" fill="#c4c4c4" />
<polygon points="1169.7,213.5 1170.7,213.8 1170.7,219.2 1169.7,218.9" fill="#c4c4c4" />
<polygon points="1168.2,225.8 1169.2,226.2 1169.2,231.1 1168.2,230.7" fill="#c4c4c4" />
<polygon points="1169.7,226.5 1170.7,226.8 1170.7,231.7 1169.7,231.3" fill="#c4c4c4" />
<polygon points="1168.2,238.2 1169.2,238.7 1169.2,243.5 1168.2,243.1" fill="#c4c4c4" />
<polygon points="1169.7,238.9 1170.7,239.3 1170.7,244.2 1169.7,243.8" fill="#c4c4c4" />
<polygon points="1168.2,250.1 1169.2,250.6 1169.2,254.9 1168.2,254.4" fill="#c4c4c4" />
<polygon points="1169.7,250.8 1170.7,251.3 1170.7,255.6 1169.7,255.2" fill="#c4c4c4" />
<polygon points="1174.6,208.6 1179.2,210.2 1179.2,261.6 1174.6,259.3" fill="#2f2f33" />
<polygon points="1175.6,215.6 1176.7,216.0 1176.7,221.5 1175.6,221.1" fill="#c4c4c4" />
<polygon points="1177.2,216.2 1178.2,216.6 1178.2,222.1 1177.2,221.7" fill="#c4c4c4" />
<polygon points="1175.6,228.9 1176.7,229.3 1176.7,234.3 1175.6,233.8" fill="#c4c4c4" />
<polygon points="1177.2,229.5 1178.2,229.9 1178.2,234.9 1177.2,234.5" fill="#c4c4c4" />
<polygon points="1175.6,241.6 1176.7,242.0 1176.7,247.0 1175.6,246.6" fill="#c4c4c4" />
<polygon points="1177.2,242.3 1178.2,242.7 1178.2,247.8 1177.2,247.3" fill="#c4c4c4" />
<polygon points="1175.6,253.7 1176.7,254.2 1176.7,258.7 1175.6,258.2" fill="#c4c4c4" />
<polygon points="1177.2,254.5 1178.2,255.0 1178.2,259.5 1177.2,258.9" fill="#c4c4c4" />
<polygon points="1182.4,211.3 1187.2,213.0 1187.2,265.7 1182.4,263.3" fill="#2f2f33" />
<polygon points="1183.4,218.5 1184.5,218.8 1184.5,224.5 1183.4,224.1" fill="#c4c4c4" />
<polygon points="1185.1,219.1 1186.1,219.4 1186.1,225.2 1185.1,224.8" fill="#c4c4c4" />
<polygon points="1183.4,232.1 1184.5,232.5 1184.5,237.6 1183.4,237.2" fill="#c4c4c4" />
<polygon points="1185.1,232.7 1186.1,233.2 1186.1,238.3 1185.1,237.9" fill="#c4c4c4" />
<polygon points="1183.4,245.1 1184.5,245.6 1184.5,250.7 1183.4,250.2" fill="#c4c4c4" />
<polygon points="1185.1,245.8 1186.1,246.3 1186.1,251.5 1185.1,251.0" fill="#c4c4c4" />
<polygon points="1183.4,257.6 1184.5,258.1 1184.5,262.6 1183.4,262.1" fill="#c4c4c4" />
<polygon points="1185.1,258.4 1186.1,258.9 1186.1,263.5 1185.1,262.9" fill="#c4c4c4" />
<polygon points="1190.5,214.1 1195.6,215.8 1195.6,270.0 1190.5,267.4" fill="#2f2f33" />
<polygon points="1191.6,221.5 1192.7,221.9 1192.7,227.7 1191.6,227.3" fill="#c4c4c4" />
<polygon points="1193.4,222.1 1194.5,222.5 1194.5,228.4 1193.4,227.9" fill="#c4c4c4" />
<polygon points="1191.6,235.4 1192.7,235.9 1192.7,241.1 1191.6,240.7" fill="#c4c4c4" />
<polygon points="1193.4,236.1 1194.5,236.6 1194.5,241.9 1193.4,241.4" fill="#c4c4c4" />
<polygon points="1191.6,248.8 1192.7,249.3 1192.7,254.6 1191.6,254.0" fill="#c4c4c4" />
<polygon points="1193.4,249.6 1194.5,250.1 1194.5,255.4 1193.4,254.8" fill="#c4c4c4" />
<polygon points="1191.6,261.6 1192.7,262.1 1192.7,266.8 1191.6,266.2" fill="#c4c4c4" />
<polygon points="1193.4,262.4 1194.5,263.0 1194.5,267.7 1193.4,267.1" fill="#c4c4c4" />
<polygon points="1199.1,217.0 1204.5,218.9 1204.5,274.6 1199.1,271.8" fill="#2f2f33" />
<polygon points="1200.3,224.6 1201.5,225.0 1201.5,231.0 1200.3,230.6" fill="#c4c4c4" />
<polygon points="1202.1,225.3 1203.3,225.7 1203.3,231.7 1202.1,231.3" fill="#c4c4c4" />
<polygon points="1200.3,239.0 1201.5,239.4 1201.5,244.8 1200.3,244.3" fill="#c4c4c4" />
<polygon points="1202.1,239.7 1203.3,240.2 1203.3,245.6 1202.1,245.1" fill="#c4c4c4" />
<polygon points="1200.3,252.7 1201.5,253.2 1201.5,258.6 1200.3,258.1" fill="#c4c4c4" />
<polygon points="1202.1,253.5 1203.3,254.1 1203.3,259.5 1202.1,258.9" fill="#c4c4c4" />
<polygon points="1200.3,265.8 1201.5,266.4 1201.5,271.2 1200.3,270.6" fill="#c4c4c4" />
<polygon points="1202.1,266.7 1203.3,267.3 1203.3,272.2 1202.1,271.6" fill="#c4c4c4" />
<polygon points="1208.2,220.1 1213.8,222.1 1213.8,279.4 1208.2,276.5" fill="#2f2f33" />
<polygon points="1209.4,227.9 1210.7,228.4 1210.7,234.6 1209.4,234.1" fill="#c4c4c4" />
<polygon points="1211.3,228.7 1212.6,229.1 1212.6,235.3 1211.3,234.8" fill="#c4c4c4" />
<polygon points="1209.4,242.7 1210.7,243.2 1210.7,248.8 1209.4,248.2" fill="#c4c4c4" />
<polygon points="1211.3,243.5 1212.6,244.0 1212.6,249.6 1211.3,249.0" fill="#c4c4c4" />
<polygon points="1209.4,256.8 1210.7,257.4 1210.7,262.9 1209.4,262.4" fill="#c4c4c4" />
<polygon points="1211.3,257.7 1212.6,258.3 1212.6,263.8 1211.3,263.3" fill="#c4c4c4" />
<polygon points="1209.4,270.3 1210.7,271.0 1210.7,275.9 1209.4,275.3" fill="#c4c4c4" />
<polygon points="1211.3,271.3 1212.6,271.9 1212.6,276.9 1211.3,276.2" fill="#c4c4c4" />
<polygon points="1217.7,223.4 1223.8,225.5 1223.8,284.4 1217.7,281.4" fill="#2f2f33" />
<polygon points="1219.1,231.5 1220.4,232.0 1220.4,238.3 1219.1,237.8" fill="#c4c4c4" />
<polygon points="1221.1,232.2 1222.4,232.7 1222.4,239.1 1221.1,238.6" fill="#c4c4c4" />
<polygon points="1219.1,246.6 1220.4,247.2 1220.4,252.9 1219.1,252.3" fill="#c4c4c4" />
<polygon points="1221.1,247.5 1222.4,248.0 1222.4,253.8 1221.1,253.2" fill="#c4c4c4" />
<polygon points="1219.1,261.2 1220.4,261.8 1220.4,267.5 1219.1,266.9" fill="#c4c4c4" />
<polygon points="1221.1,262.1 1222.4,262.7 1222.4,268.4 1221.1,267.8" fill="#c4c4c4" />
<polygon points="1219.1,275.1 1220.4,275.7 1220.4,280.8 1219.1,280.1" fill="#c4c4c4" />
<polygon points="1221.1,276.1 1222.4,276.7 1222.4,281.9 1221.1,281.2" fill="#c4c4c4" />
<polygon points="1227.9,226.9 1234.3,229.1 1234.3,289.8 1227.9,286.6" fill="#2f2f33" />
<polygon points="1229.3,235.2 1230.7,235.7 1230.7,242.3 1229.3,241.7" fill="#c4c4c4" />
<polygon points="1231.5,236.0 1232.9,236.5 1232.9,243.1 1231.5,242.6" fill="#c4c4c4" />
<polygon points="1229.3,250.8 1230.7,251.4 1230.7,257.3 1229.3,256.7" fill="#c4c4c4" />
<polygon points="1231.5,251.7 1232.9,252.3 1232.9,258.2 1231.5,257.6" fill="#c4c4c4" />
<polygon points="1229.3,265.8 1230.7,266.4 1230.7,272.3 1229.3,271.7" fill="#c4c4c4" />
<polygon points="1231.5,266.8 1232.9,267.4 1232.9,273.3 1231.5,272.7" fill="#c4c4c4" />
<polygon points="1229.3,280.1 1230.7,280.8 1230.7,286.0 1229.3,285.3" fill="#c4c4c4" />
<polygon points="1231.5,281.2 1232.9,281.9 1232.9,287.1 1231.5,286.4" fill="#c4c4c4" />
<polygon points="1238.6,230.6 1245.4,232.9 1245.4,295.5 1238.6,292.1" fill="#2f2f33" />
<polygon points="1240.1,239.2 1241.6,239.7 1241.6,246.5 1240.1,245.9" fill="#c4c4c4" />
<polygon points="1242.4,240.0 1243.9,240.6 1243.9,247.3 1242.4,246.8" fill="#c4c4c4" />
<polygon points="1240.1,255.3 1241.6,255.9 1241.6,261.9 1240.1,261.3" fill="#c4c4c4" />
<polygon points="1242.4,256.2 1243.9,256.8 1243.9,262.9 1242.4,262.3" fill="#c4c4c4" />
<polygon points="1240.1,270.7 1241.6,271.4 1241.6,277.4 1240.1,276.7" fill="#c4c4c4" />
<polygon points="1242.4,271.7 1243.9,272.4 1243.9,278.5 1242.4,277.8" fill="#c4c4c4" />
<polygon points="1240.1,285.5 1241.6,286.2 1241.6,291.6 1240.1,290.8" fill="#c4c4c4" />
<polygon points="1242.4,286.6 1243.9,287.3 1243.9,292.8 1242.4,292.0" fill="#c4c4c4" />
<polygon points="1250.1,234.5 1257.3,237.0 1257.3,301.6 1250.1,297.9" fill="#2f2f33" />
<polygon points="1251.7,243.4 1253.3,244.0 1253.3,250.9 1251.7,250.3" fill="#c4c4c4" />
<polygon points="1254.1,244.3 1255.7,244.9 1255.7,251.9 1254.1,251.3" fill="#c4c4c4" />
<polygon points="1251.7,260.0 1253.3,260.7 1253.3,266.9 1251.7,266.2" fill="#c4c4c4" />
<polygon points="1254.1,261.0 1255.7,261.7 1255.7,268.0 1254.1,267.3" fill="#c4c4c4" />
<polygon points="1251.7,275.9 1253.3,276.6 1253.3,282.9 1251.7,282.1" fill="#c4c4c4" />
<polygon points="1254.1,277.0 1255.7,277.7 1255.7,284.0 1254.1,283.3" fill="#c4c4c4" />
<polygon points="1251.7,291.1 1253.3,291.9 1253.3,297.5 1251.7,296.7" fill="#c4c4c4" />
<polygon points="1254.1,292.3 1255.7,293.1 1255.7,298.7 1254.1,297.9" fill="#c4c4c4" />
<polygon points="1262.3,238.7 1270.0,241.4 1270.0,308.1 1262.3,304.2" fill="#2f2f33" />
<polygon points="1264.0,247.9 1265.7,248.5 1265.7,255.7 1264.0,255.0" fill="#c4c4c4" />
<polygon points="1266.6,248.8 1268.3,249.5 1268.3,256.7 1266.6,256.0" fill="#c4c4c4" />
<polygon points="1264.0,265.0 1265.7,265.7 1265.7,272.2 1264.0,271.5" fill="#c4c4c4" />
<polygon points="1266.6,266.1 1268.3,266.8 1268.3,273.3 1266.6,272.6" fill="#c4c4c4" />
<polygon points="1264.0,281.5 1265.7,282.2 1265.7,288.7 1264.0,287.9" fill="#c4c4c4" />
<polygon points="1266.6,282.7 1268.3,283.4 1268.3,289.9 1266.6,289.1" fill="#c4c4c4" />
<polygon points="1264.0,297.2 1265.7,298.0 1265.7,303.8 1264.0,302.9" fill="#c4c4c4" />
<polygon points="1266.6,298.5 1268.3,299.3 1268.3,305.1 1266.6,304.2" fill="#c4c4c4" />
<polygon points="1275.3,243.2 1283.5,246.0 1283.5,315.1 1275.3,310.8" fill="#2f2f33" />
<polygon points="1277.1,252.7 1278.9,253.3 1278.9,260.8 1277.1,260.1" fill="#c4c4c4" />
<polygon points="1279.9,253.7 1281.7,254.4 1281.7,261.8 1279.9,261.1" fill="#c4c4c4" />
<polygon points="1277.1,270.4 1278.9,271.1 1278.9,277.8 1277.1,277.1" fill="#c4c4c4" />
<polygon points="1279.9,271.6 1281.7,272.3 1281.7,279.0 1279.9,278.2" fill="#c4c4c4" />
<polygon points="1277.1,287.4 1278.9,288.2 1278.9,294.9 1277.1,294.0" fill="#c4c4c4" />
<polygon points="1279.9,288.7 1281.7,289.5 1281.7,296.2 1279.9,295.4" fill="#c4c4c4" />
<polygon points="1277.1,303.6 1278.9,304.5 1278.9,310.5 1277.1,309.6" fill="#c4c4c4" />
<polygon points="1279.9,305.0 1281.7,305.9 1281.7,311.9 1279.9,311.0" fill="#c4c4c4" />
<polygon points="1289.2,248.0 1298.0,251.0 1298.0,322.5 1289.2,318.0" fill="#2f2f33" />
<polygon points="1291.1,257.8 1293.1,258.5 1293.1,266.2 1291.1,265.5" fill="#c4c4c4" />
<polygon points="1294.1,258.9 1296.1,259.6 1296.1,267.3 1294.1,266.6" fill="#c4c4c4" />
<polygon points="1291.1,276.2 1293.1,276.9 1293.1,283.9 1291.1,283.0" fill="#c4c4c4" />
<polygon points="1294.1,277.4 1296.1,278.2 1296.1,285.1 1294.1,284.3" fill="#c4c4c4" />
<polygon points="1291.1,293.7 1293.1,294.6 1293.1,301.5 1291.1,300.6" fill="#c4c4c4" />
<polygon points="1294.1,295.1 1296.1,296.0 1296.1,302.9 1294.1,302.0" fill="#c4c4c4" />
<polygon points="1291.1,310.5 1293.1,311.5 1293.1,317.6 1291.1,316.7" fill="#c4c4c4" />
<polygon points="1294.1,312.0 1296.1,313.0 1296.1,319.2 1294.1,318.2" fill="#c4c4c4" />
<polygon points="1304.1,253.1 1313.6,256.3 1313.6,330.5 1304.1,325.6" fill="#2f2f33" />
<polygon points="1306.2,263.3 1308.3,264.1 1308.3,272.0 1306.2,271.2" fill="#c4c4c4" />
<polygon points="1309.4,264.5 1311.5,265.2 1311.5,273.3 1309.4,272.5" fill="#c4c4c4" />
<polygon points="1306.2,282.3 1308.3,283.2 1308.3,290.3 1306.2,289.4" fill="#c4c4c4" />
<polygon points="1309.4,283.6 1311.5,284.5 1311.5,291.7 1309.4,290.8" fill="#c4c4c4" />
<polygon points="1306.2,300.5 1308.3,301.5 1308.3,308.6 1306.2,307.7" fill="#c4c4c4" />
<polygon points="1309.4,302.0 1311.5,302.9 1311.5,310.1 1309.4,309.2" fill="#c4c4c4" />
<polygon points="1306.2,318.0 1308.3,319.0 1308.3,325.3 1306.2,324.3" fill="#c4c4c4" />
<polygon points="1309.4,319.5 1311.5,320.6 1311.5,327.0 1309.4,325.9" fill="#c4c4c4" />
<polygon points="1320.1,258.6 1330.3,262.1 1330.3,339.0 1320.1,333.8" fill="#2f2f33" />
<polygon points="1322.4,269.2 1324.6,270.0 1324.6,278.3 1322.4,277.4" fill="#c4c4c4" />
<polygon points="1325.8,270.5 1328.1,271.3 1328.1,279.6 1325.8,278.8" fill="#c4c4c4" />
<polygon points="1322.4,288.9 1324.6,289.9 1324.6,297.3 1322.4,296.3" fill="#c4c4c4" />
<polygon points="1325.8,290.4 1328.1,291.3 1328.1,298.8 1325.8,297.8" fill="#c4c4c4" />
<polygon points="1322.4,307.8 1324.6,308.9 1324.6,316.3 1322.4,315.2" fill="#c4c4c4" />
<polygon points="1325.8,309.4 1328.1,310.4 1328.1,317.9 1325.8,316.9" fill="#c4c4c4" />
<polygon points="1322.4,325.9 1324.6,327.0 1324.6,333.6 1322.4,332.5" fill="#c4c4c4" />
<polygon points="1325.8,327.6 1328.1,328.7 1328.1,335.4 1325.8,334.2" fill="#c4c4c4" />
<polygon points="1337.4,264.5 1348.4,268.3 1348.4,348.3 1337.4,342.6" fill="#2f2f33" />
<polygon points="1339.8,275.6 1342.2,276.5 1342.2,285.1 1339.8,284.1" fill="#c4c4c4" />
<polygon points="1343.6,277.0 1346.0,277.8 1346.0,286.5 1343.6,285.6" fill="#c4c4c4" />
<polygon points="1339.8,296.1 1342.2,297.1 1342.2,304.8 1339.8,303.8" fill="#c4c4c4" />
<polygon points="1343.6,297.6 1346.0,298.6 1346.0,306.4 1343.6,305.4" fill="#c4c4c4" />
<polygon points="1339.8,315.7 1342.2,316.8 1342.2,324.5 1339.8,323.4" fill="#c4c4c4" />
<polygon points="1343.6,317.4 1346.0,318.5 1346.0,326.3 1343.6,325.2" fill="#c4c4c4" />
<polygon points="1339.8,334.5 1342.2,335.7 1342.2,342.6 1339.8,341.3" fill="#c4c4c4" />
<polygon points="1343.6,336.3 1346.0,337.5 1346.0,344.5 1343.6,343.2" fill="#c4c4c4" />
<polygon points="1356.0,270.9 1368.0,275.0 1368.0,358.3 1356.0,352.2" fill="#2f2f33" />
<polygon points="1358.7,282.5 1361.3,283.4 1361.3,292.4 1358.7,291.4" fill="#c4c4c4" />
<polygon points="1362.7,284.0 1365.4,284.9 1365.4,293.9 1362.7,292.9" fill="#c4c4c4" />
<polygon points="1358.7,303.8 1361.3,304.9 1361.3,312.9 1358.7,311.8" fill="#c4c4c4" />
<polygon points="1362.7,305.5 1365.4,306.5 1365.4,314.6 1362.7,313.5" fill="#c4c4c4" />
<polygon points="1358.7,324.2 1361.3,325.4 1361.3,333.5 1358.7,332.2" fill="#c4c4c4" />
<polygon points="1362.7,326.1 1365.4,327.2 1365.4,335.4 1362.7,334.1" fill="#c4c4c4" />
<polygon points="1358.7,343.8 1361.3,345.1 1361.3,352.2 1358.7,350.9" fill="#c4c4c4" />
<polygon points="1362.7,345.8 1365.4,347.1 1365.4,354.3 1362.7,352.9" fill="#c4c4c4" />
<polygon points="1366.2,269.9 1372.5,272.0 1371.4,362.8 1365.5,359.8" fill="#e67e55" />
<line x1="1166.0" y1="203.0" x2="1372.5" y2="272.0" stroke="#7a3218" stroke-width="1.2" />
<clipPath id="cR"><polygon points="1372.4,271.7 1404.0,261.0 1404.0,226.0 1523.0,177.0 1531.0,192.0 1524.0,250.0 1475.0,278.0 1453.0,308.0 1371.4,363.0" fill="#000" /></clipPath>
<g clip-path="url(#cR)">
<polygon points="1370.0,239.0 1530.0,173.0 1532.0,252.0 1370.0,365.0" fill="#d96e48" />
<polygon points="1408.4,233.0 1415.3,230.0 1415.3,327.2 1408.4,332.3" fill="#2f2f33" />
<polygon points="1409.9,253.4 1411.4,252.7 1411.4,263.7 1409.9,264.6" fill="#c4c4c4" />
<polygon points="1412.2,252.3 1413.7,251.5 1413.7,262.5 1412.2,263.3" fill="#c4c4c4" />
<polygon points="1409.9,274.5 1411.4,273.7 1411.4,283.6 1409.9,284.5" fill="#c4c4c4" />
<polygon points="1412.2,273.2 1413.7,272.4 1413.7,282.2 1412.2,283.1" fill="#c4c4c4" />
<polygon points="1409.9,294.5 1411.4,293.6 1411.4,303.5 1409.9,304.5" fill="#c4c4c4" />
<polygon points="1412.2,293.1 1413.7,292.1 1413.7,302.0 1412.2,303.0" fill="#c4c4c4" />
<polygon points="1409.9,315.6 1411.4,314.6 1411.4,324.5 1409.9,325.6" fill="#c4c4c4" />
<polygon points="1412.2,314.0 1413.7,313.0 1413.7,322.9 1412.2,323.9" fill="#c4c4c4" />
<polygon points="1418.4,228.6 1424.9,225.8 1424.9,320.2 1418.4,324.9" fill="#2f2f33" />
<polygon points="1419.9,248.5 1421.3,247.7 1421.3,258.5 1419.9,259.2" fill="#c4c4c4" />
<polygon points="1422.1,247.4 1423.5,246.6 1423.5,257.3 1422.1,258.1" fill="#c4c4c4" />
<polygon points="1419.9,268.9 1421.3,268.1 1421.3,277.8 1419.9,278.6" fill="#c4c4c4" />
<polygon points="1422.1,267.7 1423.5,266.9 1423.5,276.5 1422.1,277.3" fill="#c4c4c4" />
<polygon points="1419.9,288.3 1421.3,287.4 1421.3,297.1 1419.9,298.0" fill="#c4c4c4" />
<polygon points="1422.1,286.9 1423.5,286.1 1423.5,295.6 1422.1,296.6" fill="#c4c4c4" />
<polygon points="1419.9,308.8 1421.3,307.8 1421.3,317.5 1419.9,318.5" fill="#c4c4c4" />
<polygon points="1422.1,307.3 1423.5,306.3 1423.5,315.9 1422.1,316.9" fill="#c4c4c4" />
<polygon points="1427.9,224.5 1434.1,221.8 1434.1,313.5 1427.9,318.0" fill="#2f2f33" />
<polygon points="1429.3,243.8 1430.6,243.1 1430.6,253.5 1429.3,254.2" fill="#c4c4c4" />
<polygon points="1431.4,242.7 1432.7,242.0 1432.7,252.4 1431.4,253.1" fill="#c4c4c4" />
<polygon points="1429.3,263.6 1430.6,262.9 1430.6,272.3 1429.3,273.1" fill="#c4c4c4" />
<polygon points="1431.4,262.5 1432.7,261.7 1432.7,271.0 1431.4,271.8" fill="#c4c4c4" />
<polygon points="1429.3,282.5 1430.6,281.6 1430.6,291.0 1429.3,291.9" fill="#c4c4c4" />
<polygon points="1431.4,281.2 1432.7,280.3 1432.7,289.7 1431.4,290.5" fill="#c4c4c4" />
<polygon points="1429.3,302.4 1430.6,301.4 1430.6,310.8 1429.3,311.8" fill="#c4c4c4" />
<polygon points="1431.4,300.9 1432.7,300.0 1432.7,309.3 1431.4,310.3" fill="#c4c4c4" />
<polygon points="1436.9,220.6 1442.7,218.0 1442.7,307.2 1436.9,311.5" fill="#2f2f33" />
<polygon points="1438.2,239.3 1439.4,238.7 1439.4,248.8 1438.2,249.5" fill="#c4c4c4" />
<polygon points="1440.1,238.3 1441.4,237.7 1441.4,247.8 1440.1,248.4" fill="#c4c4c4" />
<polygon points="1438.2,258.6 1439.4,257.9 1439.4,267.0 1438.2,267.8" fill="#c4c4c4" />
<polygon points="1440.1,257.5 1441.4,256.8 1441.4,265.9 1440.1,266.6" fill="#c4c4c4" />
<polygon points="1438.2,277.0 1439.4,276.2 1439.4,285.3 1438.2,286.1" fill="#c4c4c4" />
<polygon points="1440.1,275.7 1441.4,274.9 1441.4,284.0 1440.1,284.8" fill="#c4c4c4" />
<polygon points="1438.2,296.3 1439.4,295.4 1439.4,304.5 1438.2,305.4" fill="#c4c4c4" />
<polygon points="1440.1,294.9 1441.4,294.1 1441.4,303.1 1440.1,304.0" fill="#c4c4c4" />
<polygon points="1445.3,216.9 1450.8,214.5 1450.8,301.2 1445.3,305.3" fill="#2f2f33" />
<polygon points="1446.6,235.1 1447.8,234.5 1447.8,244.4 1446.6,245.0" fill="#c4c4c4" />
<polygon points="1448.4,234.2 1449.6,233.6 1449.6,243.4 1448.4,244.0" fill="#c4c4c4" />
<polygon points="1446.6,253.9 1447.8,253.2 1447.8,262.1 1446.6,262.8" fill="#c4c4c4" />
<polygon points="1448.4,252.9 1449.6,252.2 1449.6,261.0 1448.4,261.7" fill="#c4c4c4" />
<polygon points="1446.6,271.7 1447.8,271.0 1447.8,279.8 1446.6,280.6" fill="#c4c4c4" />
<polygon points="1448.4,270.6 1449.6,269.8 1449.6,278.6 1448.4,279.4" fill="#c4c4c4" />
<polygon points="1446.6,290.5 1447.8,289.7 1447.8,298.6 1446.6,299.4" fill="#c4c4c4" />
<polygon points="1448.4,289.3 1449.6,288.4 1449.6,297.2 1448.4,298.1" fill="#c4c4c4" />
<polygon points="1453.4,213.4 1458.6,211.1 1458.6,295.6 1453.4,299.4" fill="#2f2f33" />
<polygon points="1454.5,231.2 1455.7,230.6 1455.7,240.2 1454.5,240.8" fill="#c4c4c4" />
<polygon points="1456.3,230.3 1457.4,229.7 1457.4,239.2 1456.3,239.8" fill="#c4c4c4" />
<polygon points="1454.5,249.5 1455.7,248.8 1455.7,257.4 1454.5,258.1" fill="#c4c4c4" />
<polygon points="1456.3,248.5 1457.4,247.8 1457.4,256.4 1456.3,257.1" fill="#c4c4c4" />
<polygon points="1454.5,266.8 1455.7,266.1 1455.7,274.7 1454.5,275.5" fill="#c4c4c4" />
<polygon points="1456.3,265.7 1457.4,265.0 1457.4,273.6 1456.3,274.3" fill="#c4c4c4" />
<polygon points="1454.5,285.1 1455.7,284.3 1455.7,292.9 1454.5,293.8" fill="#c4c4c4" />
<polygon points="1456.3,283.9 1457.4,283.1 1457.4,291.7 1456.3,292.5" fill="#c4c4c4" />
<polygon points="1461.0,210.0 1465.9,207.9 1465.9,290.2 1461.0,293.9" fill="#2f2f33" />
<polygon points="1462.0,227.4 1463.1,226.8 1463.1,236.2 1462.0,236.8" fill="#c4c4c4" />
<polygon points="1463.7,226.5 1464.8,226.0 1464.8,235.3 1463.7,235.9" fill="#c4c4c4" />
<polygon points="1462.0,245.2 1463.1,244.6 1463.1,253.0 1462.0,253.7" fill="#c4c4c4" />
<polygon points="1463.7,244.3 1464.8,243.7 1464.8,252.0 1463.7,252.7" fill="#c4c4c4" />
<polygon points="1462.0,262.1 1463.1,261.4 1463.1,269.8 1462.0,270.5" fill="#c4c4c4" />
<polygon points="1463.7,261.1 1464.8,260.4 1464.8,268.7 1463.7,269.4" fill="#c4c4c4" />
<polygon points="1462.0,279.9 1463.1,279.2 1463.1,287.6 1462.0,288.4" fill="#c4c4c4" />
<polygon points="1463.7,278.8 1464.8,278.0 1464.8,286.4 1463.7,287.2" fill="#c4c4c4" />
<polygon points="1468.2,206.9 1472.9,204.8 1472.9,285.2 1468.2,288.6" fill="#2f2f33" />
<polygon points="1469.2,223.8 1470.2,223.3 1470.2,232.4 1469.2,233.0" fill="#c4c4c4" />
<polygon points="1470.8,223.0 1471.8,222.5 1471.8,231.6 1470.8,232.1" fill="#c4c4c4" />
<polygon points="1469.2,241.2 1470.2,240.6 1470.2,248.8 1469.2,249.4" fill="#c4c4c4" />
<polygon points="1470.8,240.3 1471.8,239.7 1471.8,247.9 1470.8,248.5" fill="#c4c4c4" />
<polygon points="1469.2,257.7 1470.2,257.0 1470.2,265.2 1469.2,265.9" fill="#c4c4c4" />
<polygon points="1470.8,256.7 1471.8,256.0 1471.8,264.2 1470.8,264.8" fill="#c4c4c4" />
<polygon points="1469.2,275.0 1470.2,274.3 1470.2,282.5 1469.2,283.3" fill="#c4c4c4" />
<polygon points="1470.8,273.9 1471.8,273.2 1471.8,281.4 1470.8,282.1" fill="#c4c4c4" />
<polygon points="1475.0,203.9 1479.5,201.9 1479.5,280.3 1475.0,283.6" fill="#2f2f33" />
<polygon points="1476.0,220.4 1477.0,219.9 1477.0,228.8 1476.0,229.3" fill="#c4c4c4" />
<polygon points="1477.5,219.7 1478.5,219.2 1478.5,228.0 1477.5,228.5" fill="#c4c4c4" />
<polygon points="1476.0,237.4 1477.0,236.8 1477.0,244.8 1476.0,245.4" fill="#c4c4c4" />
<polygon points="1477.5,236.5 1478.5,236.0 1478.5,243.9 1477.5,244.5" fill="#c4c4c4" />
<polygon points="1476.0,253.4 1477.0,252.8 1477.0,260.8 1476.0,261.4" fill="#c4c4c4" />
<polygon points="1477.5,252.5 1478.5,251.9 1478.5,259.8 1477.5,260.5" fill="#c4c4c4" />
<polygon points="1476.0,270.4 1477.0,269.7 1477.0,277.7 1476.0,278.4" fill="#c4c4c4" />
<polygon points="1477.5,269.3 1478.5,268.7 1478.5,276.6 1477.5,277.3" fill="#c4c4c4" />
<polygon points="1481.6,201.0 1485.8,199.2 1485.8,275.7 1481.6,278.8" fill="#2f2f33" />
<polygon points="1482.5,217.2 1483.4,216.7 1483.4,225.4 1482.5,225.9" fill="#c4c4c4" />
<polygon points="1483.9,216.5 1484.9,216.0 1484.9,224.6 1483.9,225.1" fill="#c4c4c4" />
<polygon points="1482.5,233.7 1483.4,233.2 1483.4,241.0 1482.5,241.6" fill="#c4c4c4" />
<polygon points="1483.9,232.9 1484.9,232.4 1484.9,240.1 1483.9,240.7" fill="#c4c4c4" />
<polygon points="1482.5,249.4 1483.4,248.8 1483.4,256.6 1482.5,257.2" fill="#c4c4c4" />
<polygon points="1483.9,248.5 1484.9,247.9 1484.9,255.7 1483.9,256.3" fill="#c4c4c4" />
<polygon points="1482.5,265.9 1483.4,265.3 1483.4,273.1 1482.5,273.8" fill="#c4c4c4" />
<polygon points="1483.9,264.9 1484.9,264.3 1484.9,272.1 1483.9,272.7" fill="#c4c4c4" />
<polygon points="1487.8,198.3 1491.8,196.5 1491.8,271.3 1487.8,274.3" fill="#2f2f33" />
<polygon points="1488.7,214.1 1489.6,213.6 1489.6,222.1 1488.7,222.6" fill="#c4c4c4" />
<polygon points="1490.1,213.4 1491.0,213.0 1491.0,221.4 1490.1,221.9" fill="#c4c4c4" />
<polygon points="1488.7,230.2 1489.6,229.7 1489.6,237.4 1488.7,237.9" fill="#c4c4c4" />
<polygon points="1490.1,229.5 1491.0,229.0 1491.0,236.5 1490.1,237.1" fill="#c4c4c4" />
<polygon points="1488.7,245.5 1489.6,245.0 1489.6,252.6 1488.7,253.2" fill="#c4c4c4" />
<polygon points="1490.1,244.7 1491.0,244.1 1491.0,251.7 1490.1,252.3" fill="#c4c4c4" />
<polygon points="1488.7,261.7 1489.6,261.1 1489.6,268.7 1488.7,269.4" fill="#c4c4c4" />
<polygon points="1490.1,260.8 1491.0,260.1 1491.0,267.7 1490.1,268.4" fill="#c4c4c4" />
<polygon points="1493.7,195.7 1497.6,194.0 1497.6,267.1 1493.7,269.9" fill="#2f2f33" />
<polygon points="1494.6,211.1 1495.4,210.7 1495.4,219.0 1494.6,219.5" fill="#c4c4c4" />
<polygon points="1495.9,210.5 1496.7,210.1 1496.7,218.3 1495.9,218.7" fill="#c4c4c4" />
<polygon points="1494.6,226.9 1495.4,226.4 1495.4,233.9 1494.6,234.4" fill="#c4c4c4" />
<polygon points="1495.9,226.2 1496.7,225.7 1496.7,233.1 1495.9,233.6" fill="#c4c4c4" />
<polygon points="1494.6,241.9 1495.4,241.4 1495.4,248.8 1494.6,249.4" fill="#c4c4c4" />
<polygon points="1495.9,241.1 1496.7,240.5 1496.7,247.9 1495.9,248.5" fill="#c4c4c4" />
<polygon points="1494.6,257.7 1495.4,257.1 1495.4,264.5 1494.6,265.1" fill="#c4c4c4" />
<polygon points="1495.9,256.8 1496.7,256.2 1496.7,263.6 1495.9,264.2" fill="#c4c4c4" />
<polygon points="1499.4,193.3 1503.1,191.6 1503.1,263.1 1499.4,265.8" fill="#2f2f33" />
<polygon points="1500.2,208.3 1501.0,207.9 1501.0,216.0 1500.2,216.5" fill="#c4c4c4" />
<polygon points="1501.5,207.7 1502.3,207.3 1502.3,215.3 1501.5,215.8" fill="#c4c4c4" />
<polygon points="1500.2,223.8 1501.0,223.3 1501.0,230.6 1500.2,231.1" fill="#c4c4c4" />
<polygon points="1501.5,223.1 1502.3,222.6 1502.3,229.8 1501.5,230.3" fill="#c4c4c4" />
<polygon points="1500.2,238.4 1501.0,237.9 1501.0,245.2 1500.2,245.7" fill="#c4c4c4" />
<polygon points="1501.5,237.6 1502.3,237.1 1502.3,244.3 1501.5,244.9" fill="#c4c4c4" />
<polygon points="1500.2,253.8 1501.0,253.3 1501.0,260.5 1500.2,261.1" fill="#c4c4c4" />
<polygon points="1501.5,252.9 1502.3,252.4 1502.3,259.6 1501.5,260.2" fill="#c4c4c4" />
<polygon points="1504.8,190.9 1508.4,189.3 1508.4,259.2 1504.8,261.8" fill="#2f2f33" />
<polygon points="1505.6,205.6 1506.4,205.3 1506.4,213.2 1505.6,213.6" fill="#c4c4c4" />
<polygon points="1506.8,205.0 1507.6,204.6 1507.6,212.5 1506.8,212.9" fill="#c4c4c4" />
<polygon points="1505.6,220.7 1506.4,220.3 1506.4,227.4 1505.6,227.9" fill="#c4c4c4" />
<polygon points="1506.8,220.1 1507.6,219.6 1507.6,226.7 1506.8,227.2" fill="#c4c4c4" />
<polygon points="1505.6,235.0 1506.4,234.5 1506.4,241.7 1505.6,242.2" fill="#c4c4c4" />
<polygon points="1506.8,234.3 1507.6,233.8 1507.6,240.9 1506.8,241.4" fill="#c4c4c4" />
<polygon points="1505.6,250.1 1506.4,249.6 1506.4,256.7 1505.6,257.3" fill="#c4c4c4" />
<polygon points="1506.8,249.3 1507.6,248.8 1507.6,255.9 1506.8,256.4" fill="#c4c4c4" />
<polygon points="1510.0,188.6 1513.4,187.1 1513.4,255.5 1510.0,258.0" fill="#2f2f33" />
<polygon points="1510.7,203.1 1511.5,202.7 1511.5,210.4 1510.7,210.8" fill="#c4c4c4" />
<polygon points="1511.9,202.5 1512.6,202.1 1512.6,209.8 1511.9,210.2" fill="#c4c4c4" />
<polygon points="1510.7,217.8 1511.5,217.4 1511.5,224.4 1510.7,224.8" fill="#c4c4c4" />
<polygon points="1511.9,217.2 1512.6,216.8 1512.6,223.7 1511.9,224.1" fill="#c4c4c4" />
<polygon points="1510.7,231.8 1511.5,231.4 1511.5,238.3 1510.7,238.8" fill="#c4c4c4" />
<polygon points="1511.9,231.1 1512.6,230.6 1512.6,237.6 1511.9,238.1" fill="#c4c4c4" />
<polygon points="1510.7,246.6 1511.5,246.1 1511.5,253.1 1510.7,253.6" fill="#c4c4c4" />
<polygon points="1511.9,245.8 1512.6,245.3 1512.6,252.2 1511.9,252.8" fill="#c4c4c4" />
<polygon points="1515.0,186.5 1518.2,185.0 1518.2,252.0 1515.0,254.4" fill="#2f2f33" />
<polygon points="1515.7,200.6 1516.4,200.2 1516.4,207.8 1515.7,208.2" fill="#c4c4c4" />
<polygon points="1516.8,200.0 1517.5,199.7 1517.5,207.2 1516.8,207.6" fill="#c4c4c4" />
<polygon points="1515.7,215.1 1516.4,214.7 1516.4,221.5 1515.7,221.9" fill="#c4c4c4" />
<polygon points="1516.8,214.4 1517.5,214.0 1517.5,220.8 1516.8,221.3" fill="#c4c4c4" />
<polygon points="1515.7,228.8 1516.4,228.3 1516.4,235.1 1515.7,235.6" fill="#c4c4c4" />
<polygon points="1516.8,228.1 1517.5,227.6 1517.5,234.4 1516.8,234.9" fill="#c4c4c4" />
<polygon points="1515.7,243.2 1516.4,242.7 1516.4,249.6 1515.7,250.1" fill="#c4c4c4" />
<polygon points="1516.8,242.5 1517.5,242.0 1517.5,248.8 1516.8,249.3" fill="#c4c4c4" />
<polygon points="1519.7,184.4 1522.9,183.0 1522.9,248.6 1519.7,250.9" fill="#2f2f33" />
<polygon points="1520.4,198.2 1521.1,197.9 1521.1,205.3 1520.4,205.7" fill="#c4c4c4" />
<polygon points="1521.5,197.7 1522.2,197.4 1522.2,204.8 1521.5,205.1" fill="#c4c4c4" />
<polygon points="1520.4,212.4 1521.1,212.0 1521.1,218.7 1520.4,219.1" fill="#c4c4c4" />
<polygon points="1521.5,211.8 1522.2,211.4 1522.2,218.1 1521.5,218.5" fill="#c4c4c4" />
<polygon points="1520.4,225.8 1521.1,225.4 1521.1,232.1 1520.4,232.5" fill="#c4c4c4" />
<polygon points="1521.5,225.2 1522.2,224.7 1522.2,231.4 1521.5,231.8" fill="#c4c4c4" />
<polygon points="1520.4,240.0 1521.1,239.5 1521.1,246.2 1520.4,246.7" fill="#c4c4c4" />
<polygon points="1521.5,239.3 1522.2,238.8 1522.2,245.4 1521.5,245.9" fill="#c4c4c4" />
<polygon points="1524.3,182.4 1527.3,181.1 1527.3,245.4 1524.3,247.6" fill="#2f2f33" />
<polygon points="1525.0,196.0 1525.6,195.6 1525.6,202.9 1525.0,203.3" fill="#c4c4c4" />
<polygon points="1526.0,195.5 1526.6,195.1 1526.6,202.4 1526.0,202.7" fill="#c4c4c4" />
<polygon points="1525.0,209.8 1525.6,209.5 1525.6,216.0 1525.0,216.4" fill="#c4c4c4" />
<polygon points="1526.0,209.3 1526.6,208.9 1526.6,215.4 1526.0,215.8" fill="#c4c4c4" />
<polygon points="1525.0,223.0 1525.6,222.6 1525.6,229.1 1525.0,229.6" fill="#c4c4c4" />
<polygon points="1526.0,222.4 1526.6,221.9 1526.6,228.5 1526.0,228.9" fill="#c4c4c4" />
<polygon points="1525.0,236.9 1525.6,236.4 1525.6,243.0 1525.0,243.4" fill="#c4c4c4" />
<polygon points="1526.0,236.2 1526.6,235.7 1526.6,242.2 1526.0,242.7" fill="#c4c4c4" />
<polygon points="1372.0,239.0 1403.8,225.9 1402.1,340.3 1371.4,363.0" fill="#e67e55" />
</g>
<polygon points="1169.0,204.0 1312.0,173.0 1281.0,196.0 1315.0,214.0 1317.0,243.0 1385.0,265.4 1372.4,271.7" fill="#b9bbd6" />
<line x1="1205.0" y1="205.0" x2="1330.0" y2="245.0" stroke="#a07070" stroke-width="0.7" stroke-dasharray="2 2"/>
<line x1="1240.0" y1="199.0" x2="1300.0" y2="218.0" stroke="#a07070" stroke-width="0.7" stroke-dasharray="2 2"/>
<line x1="1190.0" y1="216.0" x2="1300.0" y2="185.0" stroke="#a07070" stroke-width="0.7" stroke-dasharray="2 2"/>
<line x1="1220.0" y1="232.0" x2="1310.0" y2="205.0" stroke="#a07070" stroke-width="0.7" stroke-dasharray="2 2"/>
<line x1="1260.0" y1="248.0" x2="1313.0" y2="230.0" stroke="#a07070" stroke-width="0.7" stroke-dasharray="2 2"/>
<polygon points="1163.0,198.5 1312.0,168.5 1313.0,174.5 1186.0,203.5 1169.0,206.0" fill="#d96e48" />
<line x1="1169.0" y1="205.0" x2="1312.0" y2="174.0" stroke="#7a3218" stroke-width="0.9" />
<line x1="1163.0" y1="199.0" x2="1312.0" y2="169.0" stroke="#7a3218" stroke-width="1.0" />
<line x1="1169.0" y1="206.0" x2="1372.4" y2="272.0" stroke="#7a3218" stroke-width="1.4" />
<line x1="1227.0" y1="207.0" x2="1275.0" y2="196.0" stroke="#1e1e1e" stroke-width="1.4" />
<ellipse cx="1242" cy="214" rx="2" ry="1.1" fill="#8a8a9a"/>
<ellipse cx="1258" cy="220" rx="2" ry="1.1" fill="#8a8a9a"/>
<ellipse cx="1276" cy="226" rx="2" ry="1.1" fill="#8a8a9a"/>
<ellipse cx="1292" cy="232" rx="2" ry="1.1" fill="#8a8a9a"/>
<ellipse cx="1305" cy="238" rx="2" ry="1.1" fill="#8a8a9a"/>
<ellipse cx="1268" cy="210" rx="2" ry="1.1" fill="#8a8a9a"/>
<ellipse cx="1289" cy="216" rx="2" ry="1.1" fill="#8a8a9a"/>
<ellipse cx="1230" cy="219" rx="2" ry="1.1" fill="#8a8a9a"/>
<ellipse cx="1250" cy="225" rx="2" ry="1.1" fill="#8a8a9a"/>
<ellipse cx="1300" cy="255" rx="2" ry="1.1" fill="#8a8a9a"/>
<ellipse cx="1310" cy="262" rx="2" ry="1.1" fill="#8a8a9a"/>
<ellipse cx="1215" cy="214" rx="2" ry="1.1" fill="#8a8a9a"/>
<ellipse cx="1280" cy="240" rx="2" ry="1.1" fill="#8a8a9a"/>
<polygon points="1312.0,168.5 1347.4,163.5 1425.0,174.5 1400.0,186.0 1379.0,197.5 1362.6,194.8 1315.8,205.7 1315.0,214.0 1281.0,196.0" fill="#b9bbd6" />
<polygon points="1347.4,163.5 1425.0,174.0 1425.0,178.5 1347.4,168.0" fill="#d96e48" />
<line x1="1347.4" y1="163.5" x2="1425.0" y2="174.0" stroke="#7a3218" stroke-width="0.9" />
<line x1="1347.4" y1="168.0" x2="1425.0" y2="178.5" stroke="#7a3218" stroke-width="0.6" />
<polygon points="1351.0,179.0 1403.0,185.0 1403.0,195.0 1351.0,195.0" fill="#3a3a3e" />
<polygon points="1353.0,180.0 1355.6,180.3 1355.6,192.0 1353.0,192.0" fill="#e6e6de" />
<polygon points="1360.0,180.7 1362.6,181.0 1362.6,192.7 1360.0,192.7" fill="#e6e6de" />
<polygon points="1367.0,181.4 1369.6,181.7 1369.6,193.4 1367.0,193.4" fill="#e6e6de" />
<polygon points="1374.0,182.1 1376.6,182.4 1376.6,194.1 1374.0,194.1" fill="#e6e6de" />
<polygon points="1381.0,182.8 1383.6,183.1 1383.6,194.8 1381.0,194.8" fill="#e6e6de" />
<polygon points="1388.0,183.5 1390.6,183.8 1390.6,195.5 1388.0,195.5" fill="#e6e6de" />
<polygon points="1395.0,184.2 1397.6,184.5 1397.6,196.2 1395.0,196.2" fill="#e6e6de" />
<polygon points="1281.0,193.0 1318.0,184.0 1318.0,207.0 1281.0,199.0" fill="#3a3a3e" />
<polygon points="1283.0,191.5 1285.4,190.9 1285.4,198.5 1283.0,199.1" fill="#d6d6d6" />
<polygon points="1289.0,190.0 1291.4,189.4 1291.4,197.0 1289.0,197.6" fill="#d6d6d6" />
<polygon points="1295.0,188.5 1297.4,187.9 1297.4,195.5 1295.0,196.1" fill="#d6d6d6" />
<polygon points="1301.0,187.0 1303.4,186.4 1303.4,194.0 1301.0,194.6" fill="#d6d6d6" />
<polygon points="1307.0,185.5 1309.4,184.9 1309.4,192.5 1307.0,193.1" fill="#d6d6d6" />
<polygon points="1313.0,184.0 1315.4,183.4 1315.4,191.0 1313.0,191.6" fill="#d6d6d6" />
<polygon points="1278.7,198.6 1314.7,207.3 1314.7,216.0 1278.7,205.1" fill="#f3eed6" />
<line x1="1278.7" y1="198.6" x2="1314.7" y2="207.3" stroke="#777" stroke-width="0.6" />
<polygon points="1312.0,172.0 1337.0,167.5 1351.0,171.0 1351.0,197.0 1337.0,199.0 1314.0,196.0" fill="#d96e48" />
<polygon points="1340.0,180.0 1348.0,178.0 1348.0,196.0 1340.0,198.0" fill="#333" />
<line x1="1312.0" y1="172.0" x2="1337.0" y2="167.5" stroke="#7a3218" stroke-width="0.9" />
<line x1="1337.0" y1="167.5" x2="1351.0" y2="171.0" stroke="#7a3218" stroke-width="0.9" />
<line x1="1330.0" y1="176.0" x2="1330.0" y2="198.0" stroke="#7a3218" stroke-width="0.6" />
<line x1="1312.0" y1="172.0" x2="1314.0" y2="196.0" stroke="#7a3218" stroke-width="0.6" />
<polygon points="1315.8,205.7 1404.6,225.8 1404.0,261.0 1385.0,265.4 1317.0,243.0" fill="#d76c46" />
<line x1="1316.0" y1="215.0" x2="1404.0" y2="235.0" stroke="#7a3218" stroke-width="0.8" />
<line x1="1404.6" y1="225.8" x2="1404.0" y2="262.0" stroke="#7a3218" stroke-width="1.0" />
<line x1="1315.8" y1="205.7" x2="1317.0" y2="243.0" stroke="#7a3218" stroke-width="0.9" />
<polygon points="1315.8,205.7 1362.6,194.8 1379.0,197.5 1443.3,177.9 1453.0,169.2 1523.0,176.5 1524.0,181.0 1404.6,227.0" fill="#d96e48" />
<polygon points="1338.0,208.4 1362.6,199.0 1379.0,202.5 1445.0,182.0 1455.0,174.5 1516.0,180.5 1404.6,223.5" fill="#b9bbd6" />
<line x1="1315.8" y1="205.7" x2="1404.6" y2="226.5" stroke="#7a3218" stroke-width="1.2" />
<line x1="1404.6" y1="226.5" x2="1524.0" y2="180.0" stroke="#7a3218" stroke-width="1.2" />
<line x1="1453.0" y1="169.2" x2="1523.0" y2="177.0" stroke="#7a3218" stroke-width="1.0" />
<line x1="1379.0" y1="197.5" x2="1443.3" y2="177.9" stroke="#7a3218" stroke-width="0.9" />
<line x1="1315.8" y1="205.7" x2="1362.6" y2="194.8" stroke="#7a3218" stroke-width="0.9" />
<line x1="1381.0" y1="190.0" x2="1381.0" y2="196.0" stroke="#666" stroke-width="1.2" />
<line x1="1345.0" y1="232.0" x2="1345.0" y2="225.0" stroke="#6040c0" stroke-width="1" />
<line x1="1345.0" y1="232.0" x2="1340.0" y2="234.5" stroke="#e02020" stroke-width="1" />
<line x1="1345.0" y1="232.0" x2="1351.0" y2="234.5" stroke="#20c040" stroke-width="1" />
<polygon points="1330.0,241.0 1336.0,242.0 1336.0,255.0 1330.0,254.0" fill="#c89080" />
<line x1="1170.0" y1="224.8" x2="1372.8" y2="311.3" stroke="#6e6e6e" stroke-width="3.4" />
<line x1="1170.0" y1="224.8" x2="1372.8" y2="311.3" stroke="#e2e2e2" stroke-width="2.1" />
<line x1="1173.3" y1="243.1" x2="1372.8" y2="337.9" stroke="#6e6e6e" stroke-width="3.4" />
<line x1="1173.3" y1="243.1" x2="1372.8" y2="337.9" stroke="#e2e2e2" stroke-width="2.1" />
<line x1="1372.8" y1="311.3" x2="1527.4" y2="214.8" stroke="#6e6e6e" stroke-width="3.4" />
<line x1="1372.8" y1="311.3" x2="1527.4" y2="214.8" stroke="#e2e2e2" stroke-width="2.1" />
<line x1="1372.8" y1="337.9" x2="1525.8" y2="231.5" stroke="#6e6e6e" stroke-width="3.4" />
<line x1="1372.8" y1="337.9" x2="1525.8" y2="231.5" stroke="#e2e2e2" stroke-width="2.1" />
<polygon points="1389.0,318.0 1416.0,304.0 1420.0,310.0 1393.0,325.0" fill="#1e1e1e" />
<polygon points="1391.0,317.0 1415.0,305.0 1417.0,308.0 1393.0,320.0" fill="#c8c8d8" />
<polygon points="1491.0,252.0 1509.0,243.0 1512.0,248.0 1494.0,257.0" fill="#1e1e1e" />
<polygon points="1493.0,251.0 1508.0,244.0 1510.0,246.0 1495.0,253.0" fill="#b8b8c8" />
<polygon points="1191.0,251.0 1205.0,257.0 1203.0,262.0 1189.0,256.0" fill="#1e1e1e" />
<line x1="1371.4" y1="272.0" x2="1371.4" y2="384.0" stroke="#4a2010" stroke-width="0.8" />
</svg>
<svg style="left:0;top:0" width="1" height="1">
<path d="M1625 445.6H1620Q1618.6 445.6 1618.6 444.2V435.9Q1618.6 434.5 1620 434.5H1628.5Q1629.9 434.5 1629.9 435.9V441" fill="none" stroke="#e2e2e2" stroke-width="1.5"/>
<rect x="1623.4" y="440" width="11.5" height="11" rx="1.4" fill="none" stroke="#e2e2e2" stroke-width="1.5"/>
<path d="M1655.1 437H1668.8M1655.1 451.9H1668.8" stroke="#e2e2e2" stroke-width="1.8"/>
<path d="M1662 440.5V448.5" stroke="#e2e2e2" stroke-width="1.6"/>
<path d="M1659 442.5L1662 439.2L1665 442.5ZM1659 446.5L1662 449.8L1665 446.5Z" fill="#e2e2e2"/>
<rect x="1689" y="442.8" width="14" height="3" fill="#d0d0d0"/>
<path d="M1696 434.8V439M1696 449.5V453.5" stroke="#e2e2e2" stroke-width="1.5"/>
<path d="M1693 438L1696 441.5L1699 438ZM1693 450.5L1696 447L1699 450.5Z" fill="#e2e2e2"/>
<g transform="translate(1730 443.8)">
<path d="M-1.9 -8.3H1.9L2.4 -5.9L4.2 -4.9L6.5 -5.9L8.4 -2.6L6.6 -1V1L8.4 2.6L6.5 5.9L4.2 4.9L2.4 5.9L1.9 8.3H-1.9L-2.4 5.9L-4.2 4.9L-6.5 5.9L-8.4 2.6L-6.6 1V-1L-8.4 -2.6L-6.5 -5.9L-4.2 -4.9L-2.4 -5.9Z" fill="#e2e2e2"/>
<circle r="2.8" fill="#555555"/>
</g>
<path d="M1759.6 442.4L1764.2 446.9L1768.8 442.4" fill="none" stroke="#e2e2e2" stroke-width="1.8"/>
</svg>
<div class="a" style="left:1796px;top:37px;width:36px;height:771px;background:#555555;"></div>
<div class="a" style="left:1796px;top:128.7px;width:36px;height:1.4px;background:#393535"></div>
<div class="a" style="left:1796px;top:398px;width:36px;height:1.4px;background:#393535"></div>
<div class="a" style="left:1796px;top:447px;width:36px;height:1.4px;background:#393535"></div>
<div class="a" style="left:1796px;top:628px;width:36px;height:1.4px;background:#393535"></div>
<div class="a" style="left:1796px;top:721px;width:36px;height:1.4px;background:#393535"></div>
<div class="a" style="left:1798px;top:637px;width:31.8px;height:32px;background:#8a8a8a;"></div>
<div class="a" style="left:1798px;top:681px;width:31.8px;height:32px;background:#8a8a8a;"></div>
<div class="a" style="left:1832px;top:0px;width:3px;height:812px;background:#0d0d0d;"></div>
<svg style="left:0;top:0" width="1" height="1">
<g fill="none" stroke="#e2e2e2" stroke-width="1.4" stroke-linecap="round">
<path d="M1810.5 66.4H1808Q1802.7 66 1802.7 61Q1803 55.8 1807.5 55.5Q1808.5 49.8 1814.3 49.8Q1820 49.8 1821 55.5Q1825.9 56 1825.9 61Q1825.7 66 1820.5 66.4H1818.5"/>
<path d="M1814.3 55.5V72.2M1814.3 63L1809 58.5M1814.3 62.5L1819.5 59M1814.3 59.5L1817.5 56.5"/>
</g>
<path d="M1809 110.2H1801.3V92.1H1825V98.6M1809.3 110.2V112.6H1806" fill="none" stroke="#e8e8e8" stroke-width="1.2"/>
<path d="M1811 105.5V101H1815.5M1822.5 101H1827V105.5M1827 113V117.6H1822.5M1815.5 117.6H1811V113" fill="none" stroke="#e8e8e8" stroke-width="1.2"/>
<path d="M1818.7 105.5L1822.4 107.6V111.9L1818.7 114L1815 111.9V107.6Z" fill="#e0e0e0"/>
<rect x="1801.5" y="149.5" width="25" height="7.8" fill="none" stroke="#e8e8e8" stroke-width="1.3"/>
<path d="M1805 157V152.5M1807.2 157V155M1809.9 157V154M1813.2 157V152.5M1816 157V155M1818.2 157V154M1821 157V155M1824.3 157V152.5" stroke="#e8e8e8" stroke-width="1"/>
<rect x="1801" y="159" width="26" height="1.9" fill="#e8e8e8"/>
<path d="M1809.1 192.5L1819.1 184.3V204L1809.1 212Z" fill="#dcdcdc"/>
<path d="M1800.4 200.4L1808.5 194.1H1827.6L1819.2 200.4Z" fill="none" stroke="#e8e8e8" stroke-width="1.3"/>
<g fill="none" stroke="#e8e8e8" stroke-width="1.1">
<path d="M1802.1 235.5H1819.3V252.7H1802.1Z"/>
<path d="M1808.7 231.1H1825.7V248.3H1819.3M1802.1 235.5L1808.7 231.1M1819.3 235.5L1825.7 231.1M1819.3 252.7L1825.7 248.3M1802.1 252.7L1808.7 248.3"/>
</g>
<path d="M1810 235.5L1816.6 231.1V248.3L1810 252.7Z" fill="#d8d8d8"/>
<path d="M1804 275H1826.5V296H1800.4V279Z" fill="none" stroke="#e8e8e8" stroke-width="1.3"/>
<path d="M1800.4 279L1804 275V279Z" fill="#e8e8e8"/>
<path d="M1827.4 276.5V297.5H1802" fill="none" stroke="#d0d0d0" stroke-width="1.4"/>
<path d="M1800.6 284.1H1826M1812.4 275.5V295.5" stroke="#e8e8e8" stroke-width="1.1" stroke-dasharray="2.2 1.4"/>
<rect x="1818.7" y="291.5" width="6.7" height="3" fill="none" stroke="#e8e8e8" stroke-width="1"/>
<circle cx="1814" cy="330.2" r="7.9" fill="none" stroke="#e8e8e8" stroke-width="1.7"/>
<circle cx="1814" cy="330.2" r="4.1" fill="#e0e0e0"/>
<path d="M1814 319.2V322M1814 338.4V341.2M1803 330.2H1805.8M1822.2 330.2H1825" stroke="#e8e8e8" stroke-width="1.6"/>
<circle cx="1813.7" cy="373.7" r="12.7" fill="none" stroke="#e8e8e8" stroke-width="1.1"/>
<path d="M1808.4 381V367.6H1814.5L1816 369.5H1821.8V376.8H1816L1814.5 374.8H1808.4" fill="none" stroke="#e8e8e8" stroke-width="1.1"/>
<g stroke="#e0e0e0" stroke-width="1.2">
<path d="M1799.3 427.2L1828.7 410.3M1799.9 436.8L1829 420.3M1800.2 421.4L1818.7 432.1M1809.1 415.3L1827.9 425.8"/>
</g>
<text x="1799.2" y="419.5" font-family="Liberation Sans" font-size="7.5" font-weight="bold" fill="#e0e0e0">1</text>
<text x="1809" y="413" font-family="Liberation Sans" font-size="7.5" font-weight="bold" fill="#e0e0e0">2</text>
<rect x="1802.1" y="460.4" width="23.8" height="23.4" fill="none" stroke="#e8e8e8" stroke-width="1.3" stroke-dasharray="2 1.6"/>
<path d="M1813.7 465.5L1819.2 468.6V474.8L1813.7 477.9L1808.2 474.8V468.6Z M1808.2 468.6L1813.7 471.7L1819.2 468.6M1813.7 471.7V477.9" fill="none" stroke="#e0e0e0" stroke-width="1.1"/>
<rect x="1802.1" y="504.1" width="23.8" height="23.4" fill="none" stroke="#e8e8e8" stroke-width="1.3" stroke-dasharray="2 1.6"/>
<path d="M1806.7 516Q1814 507 1821.3 516Q1814 525 1806.7 516Z" fill="#e0e0e0"/>
<circle cx="1814" cy="516" r="2.6" fill="#555555"/>
<circle cx="1814" cy="516" r="1.6" fill="#e0e0e0"/>
<rect x="1802.1" y="548.2" width="23.8" height="23.4" fill="none" stroke="#e8e8e8" stroke-width="1.3" stroke-dasharray="2 1.6"/>
<path d="M1806.7 559.8Q1814 550.8 1821.3 559.8Q1814 568.8 1806.7 559.8Z" fill="#e0e0e0"/>
<circle cx="1814" cy="559.8" r="2.6" fill="#555555"/>
<path d="M1807.1 553.7L1820.2 567" stroke="#555555" stroke-width="2.2"/>
<path d="M1807.1 553.7L1820.2 567" stroke="#e0e0e0" stroke-width="1"/>
<path d="M1812.1 615.5H1802.1V592.2H1825.9V602" fill="none" stroke="#e8e8e8" stroke-width="1.3" stroke-dasharray="2 1.6"/>
<rect x="1812.1" y="602.2" width="16.1" height="15.5" fill="#e0e0e0"/>
<path d="M1815.7 606.3L1824.3 614.4M1824.3 606.3L1815.7 614.4" stroke="#333" stroke-width="1.1"/>
<path d="M1802.4 643.9L1813.7 646.4V665.3L1804.5 657.2Z" fill="#e6e6e6"/>
<path d="M1802.4 643.9L1813.7 641.1L1825 643.9L1813.7 646.4ZM1813.7 646.4L1825 643.9L1823 657.2L1813.7 665.3" fill="none" stroke="#e6e6e6" stroke-width="1.5" stroke-linejoin="round"/>
<ellipse cx="1814" cy="697.1" rx="4.6" ry="10.6" fill="none" stroke="#e6e6e6" stroke-width="1.5"/>
<ellipse cx="1814" cy="697.1" rx="11.3" ry="4.5" fill="none" stroke="#e6e6e6" stroke-width="1.5"/>
<path d="M1814 697V693M1814 697L1810.5 700.5M1814 697L1817.5 700.5" stroke="#e6e6e6" stroke-width="0.9"/>
<path d="M1797.8 801.8V806H1802Z" fill="#f0f0f0"/>
</svg>
</body></html>
